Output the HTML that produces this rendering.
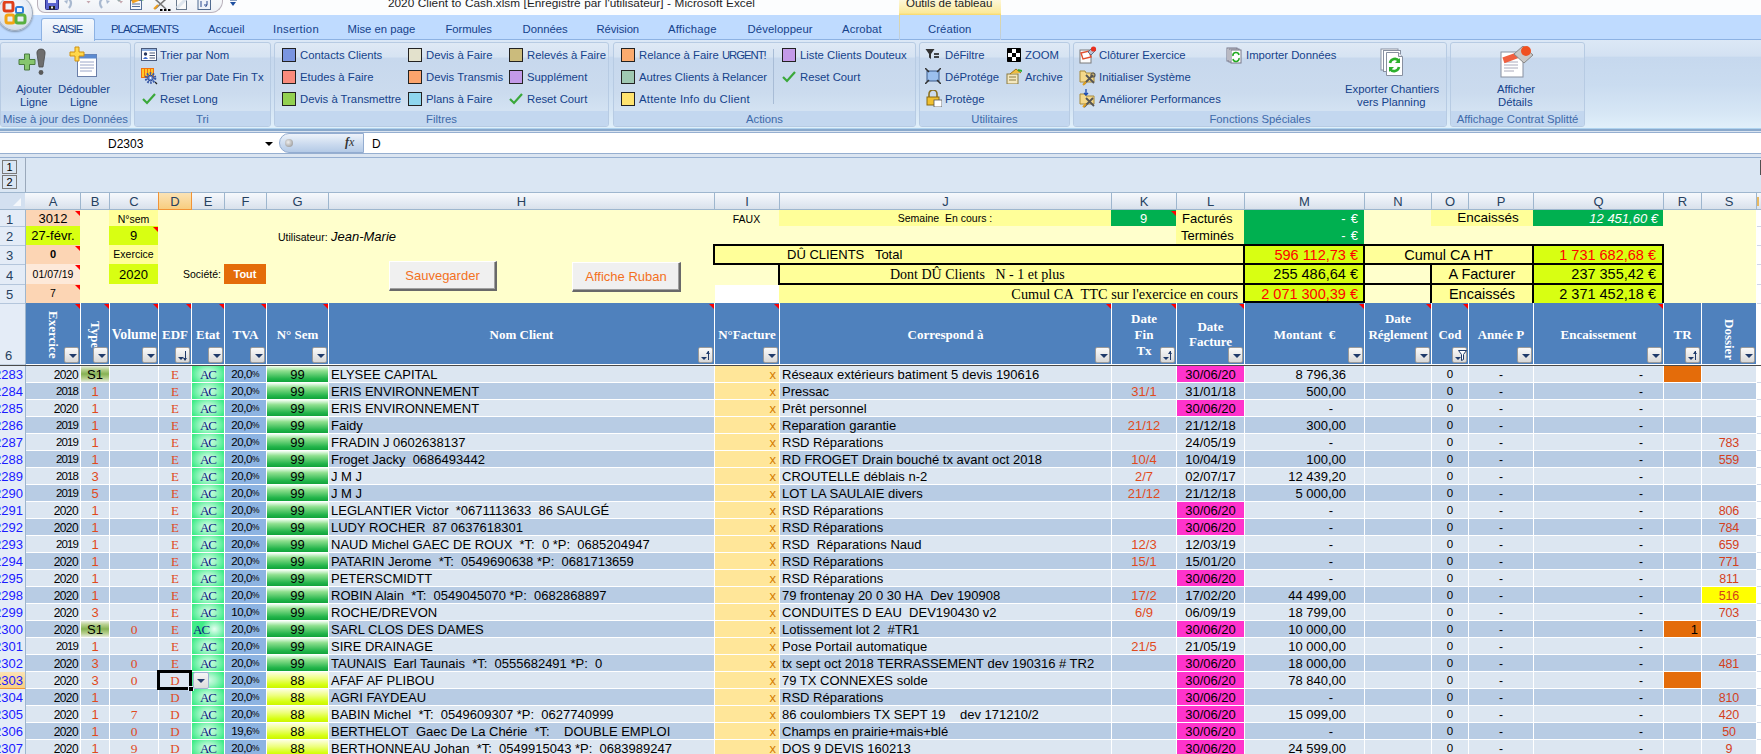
<!DOCTYPE html><html><head><meta charset="utf-8"><style>
*{margin:0;padding:0;box-sizing:border-box}
html,body{width:1761px;height:754px;overflow:hidden;background:#fff;font-family:"Liberation Sans",sans-serif}
div{position:absolute}
.t{white-space:nowrap;line-height:1}
.rb{font-size:11.3px;color:#15428b}
.c{display:flex;align-items:center;white-space:nowrap;overflow:hidden;line-height:1}
.cc{justify-content:center}
.cr{justify-content:flex-end}
</style></head><body><div style="left:0px;top:0px;width:1761px;height:15px;background:#fcfdfe"></div>
<div style="left:0px;top:15px;width:1761px;height:25px;background:#bfdbff"></div>
<div style="left:0px;top:39px;width:1761px;height:1px;background:#8db2e3"></div>
<div style="left:0px;top:40px;width:1761px;height:90px;background:linear-gradient(#dce8f6 0%,#d3e1f2 18%,#c6d8ee 19%,#cadcf0 50%,#d6e6f5 80%,#e2f1fb 100%)"></div>
<div style="left:0px;top:128px;width:1761px;height:1px;background:#aed2ee"></div>
<div style="left:0px;top:129px;width:1761px;height:2px;background:#8aa9cc"></div>
<div class="t" style="left:388px;top:-2px;font-size:11.8px;color:#1e1e1e;word-spacing:0.3px">2020 Client to Cash.xlsm [Enregistré par l'utilisateur] - Microsoft Excel</div>
<div style="left:899px;top:0px;width:102px;height:15px;background:linear-gradient(#fdf7d9,#fbe99a 85%,#f7d86a)"></div>
<div class="t" style="left:906px;top:-2px;font-size:11.5px;color:#1e1e1e">Outils de tableau</div>
<div style="left:37px;top:-8px;width:186px;height:21px;border-radius:0 0 12px 8px;background:linear-gradient(#fbfcfd,#eef1f6);border:1px solid #b9b1bb;border-top:none"></div>
<div style="left:116px;top:-1px;width:0;height:0;border-left:3px solid transparent;border-right:3px solid transparent;border-top:3px solid #9aa"></div>
<div style="left:-3px;top:-5px;width:36px;height:36px;border-radius:50%;background:radial-gradient(circle at 50% 35%,#f8fbff 0%,#e2e9f3 55%,#c5d1e0 100%);border:1px solid #9eaabb;box-shadow:0 1px 2px rgba(0,0,0,.35)"></div>
<svg style="position:absolute;left:2px;top:1px" width="26" height="25"><rect x="2" y="1" width="9" height="9" rx="2" fill="none" stroke="#e0401a" stroke-width="3"/><rect x="14" y="6" width="7" height="6" rx="1.5" fill="none" stroke="#2f7ed8" stroke-width="2"/><rect x="4" y="14" width="8" height="8" rx="2" fill="none" stroke="#f2a516" stroke-width="3"/><rect x="14" y="14" width="9" height="8" rx="2" fill="none" stroke="#58b040" stroke-width="3"/></svg>
<svg style="position:absolute;left:30px;top:0px" width="220" height="16"><rect x="15.5" y="-2" width="13" height="11.5" rx="1" fill="#5a64d0" stroke="#2c2f8a"/><rect x="18" y="-2" width="8" height="5" fill="#eef"/><rect x="19" y="6" width="6" height="3.5" fill="#222"/><rect x="21" y="6.5" width="2" height="2" fill="#eee"/><path d="M39 -1 q4 4 0 9" fill="none" stroke="#a9b9d0" stroke-width="2.2"/><path d="M38 0 l-4 1 3 3z" fill="#a9b9d0"/><path d="M56.5 1 l2 2.5 2-2.5z" fill="#c6a8b0"/><path d="M72 -1 q-4 4 0 9" fill="none" stroke="#a9b9d0" stroke-width="2.2"/><path d="M76 0 l4 1 -3 3z" fill="#a9b9d0"/><path d="M89 1 l2 2.5 2-2.5z" fill="#c6a8b0"/><rect x="100.5" y="0.5" width="11" height="9" fill="#f4f6fa" stroke="#55709a"/><path d="M102 4h8M102 6.5h8" stroke="#55709a"/><path d="M102 2 l7 -3" stroke="#f0a020" stroke-width="3"/><path d="M112 0 l3 -2" stroke="#30a030" stroke-width="2"/><path d="M125 -1 l11 10 M136 -1 l-11 10" stroke="#777" stroke-width="1.6"/><path d="M124 9 l4 -4" stroke="#f0a020" stroke-width="2"/><path d="M130 10h2.5M134 10h2.5M138 10h2.5" stroke="#000" stroke-width="1.8"/><rect x="146.5" y="-2" width="10" height="11.5" fill="#fafafa" stroke="#6a7a8e"/><path d="M147 8 l9 -9" stroke="#dfe6ee" stroke-width="3"/><rect x="168" y="-2" width="12.5" height="11.5" fill="#eef3fa" stroke="#4f6a8f"/><path d="M171 1v6M174 5h3l-1.5 2M177 1 v4" stroke="#2a4a8f" fill="none"/></svg>
<div style="left:230px;top:2px;width:0;height:0;border-left:3.5px solid transparent;border-right:3.5px solid transparent;border-top:4px solid #1f4fa0"></div>
<div style="left:230px;top:0px;width:7px;height:1px;background:#8aa0c0"></div>
<div style="left:41px;top:18px;width:54px;height:23px;border:1px solid #8db2e3;border-bottom:none;border-radius:3px 3px 0 0;background:linear-gradient(#f4f8fd,#e1ebf7)"></div>
<div class="t" style="left:52px;top:24px;font-size:11.3px;color:#15428b;letter-spacing:-1.05px">SAISIE</div>
<div class="t" style="left:111px;top:24px;font-size:11.3px;color:#15428b;letter-spacing:-0.95px">PLACEMENTS</div>
<div class="t" style="left:208px;top:24px;font-size:11.3px;color:#15428b;letter-spacing:0px">Accueil</div>
<div class="t" style="left:273px;top:24px;font-size:11.3px;color:#15428b;letter-spacing:0.3px">Insertion</div>
<div class="t" style="left:347.5px;top:24px;font-size:11.3px;color:#15428b;letter-spacing:0px">Mise en page</div>
<div class="t" style="left:445.5px;top:24px;font-size:11.3px;color:#15428b;letter-spacing:-0.1px">Formules</div>
<div class="t" style="left:522.5px;top:24px;font-size:11.3px;color:#15428b;letter-spacing:0px">Données</div>
<div class="t" style="left:596.5px;top:24px;font-size:11.3px;color:#15428b;letter-spacing:-0.1px">Révision</div>
<div class="t" style="left:668px;top:24px;font-size:11.3px;color:#15428b;letter-spacing:0.2px">Affichage</div>
<div class="t" style="left:747.5px;top:24px;font-size:11.3px;color:#15428b;letter-spacing:0.1px">Développeur</div>
<div class="t" style="left:842px;top:24px;font-size:11.3px;color:#15428b;letter-spacing:0.1px">Acrobat</div>
<div class="t" style="left:928px;top:24px;font-size:11.3px;color:#15428b;letter-spacing:0.1px">Création</div>
<div style="left:899px;top:15px;width:1px;height:25px;background:linear-gradient(#e8d890,#b8cce8)"></div>
<div style="left:1000px;top:15px;width:1px;height:25px;background:linear-gradient(#e8d890,#b8cce8)"></div>
<div style="left:0px;top:42px;width:131px;height:85px;border:1px solid #b7cbe3;border-radius:3px;background:linear-gradient(#dfe9f5 0%,#d6e3f2 17%,#c7d8ed 18%,#cbdbee 60%,#d3e2f2 80%)"></div>
<div style="left:1px;top:111px;width:129px;height:15px;background:#c3d7ef;border-radius:0 0 2px 2px"></div>
<div class="c cc" style="left:0px;top:112px;width:131px;height:15px;font-size:11.3px;color:#3e6aaa">Mise à jour des Données</div>
<div style="left:134px;top:42px;width:137px;height:85px;border:1px solid #b7cbe3;border-radius:3px;background:linear-gradient(#dfe9f5 0%,#d6e3f2 17%,#c7d8ed 18%,#cbdbee 60%,#d3e2f2 80%)"></div>
<div style="left:135px;top:111px;width:135px;height:15px;background:#c3d7ef;border-radius:0 0 2px 2px"></div>
<div class="c cc" style="left:134px;top:112px;width:137px;height:15px;font-size:11.3px;color:#3e6aaa">Tri</div>
<div style="left:274px;top:42px;width:335px;height:85px;border:1px solid #b7cbe3;border-radius:3px;background:linear-gradient(#dfe9f5 0%,#d6e3f2 17%,#c7d8ed 18%,#cbdbee 60%,#d3e2f2 80%)"></div>
<div style="left:275px;top:111px;width:333px;height:15px;background:#c3d7ef;border-radius:0 0 2px 2px"></div>
<div class="c cc" style="left:274px;top:112px;width:335px;height:15px;font-size:11.3px;color:#3e6aaa">Filtres</div>
<div style="left:613px;top:42px;width:303px;height:85px;border:1px solid #b7cbe3;border-radius:3px;background:linear-gradient(#dfe9f5 0%,#d6e3f2 17%,#c7d8ed 18%,#cbdbee 60%,#d3e2f2 80%)"></div>
<div style="left:614px;top:111px;width:301px;height:15px;background:#c3d7ef;border-radius:0 0 2px 2px"></div>
<div class="c cc" style="left:613px;top:112px;width:303px;height:15px;font-size:11.3px;color:#3e6aaa">Actions</div>
<div style="left:919px;top:42px;width:151px;height:85px;border:1px solid #b7cbe3;border-radius:3px;background:linear-gradient(#dfe9f5 0%,#d6e3f2 17%,#c7d8ed 18%,#cbdbee 60%,#d3e2f2 80%)"></div>
<div style="left:920px;top:111px;width:149px;height:15px;background:#c3d7ef;border-radius:0 0 2px 2px"></div>
<div class="c cc" style="left:919px;top:112px;width:151px;height:15px;font-size:11.3px;color:#3e6aaa">Utilitaires</div>
<div style="left:1073px;top:42px;width:374px;height:85px;border:1px solid #b7cbe3;border-radius:3px;background:linear-gradient(#dfe9f5 0%,#d6e3f2 17%,#c7d8ed 18%,#cbdbee 60%,#d3e2f2 80%)"></div>
<div style="left:1074px;top:111px;width:372px;height:15px;background:#c3d7ef;border-radius:0 0 2px 2px"></div>
<div class="c cc" style="left:1073px;top:112px;width:374px;height:15px;font-size:11.3px;color:#3e6aaa">Fonctions Spéciales</div>
<div style="left:1450px;top:42px;width:135px;height:85px;border:1px solid #b7cbe3;border-radius:3px;background:linear-gradient(#dfe9f5 0%,#d6e3f2 17%,#c7d8ed 18%,#cbdbee 60%,#d3e2f2 80%)"></div>
<div style="left:1451px;top:111px;width:133px;height:15px;background:#c3d7ef;border-radius:0 0 2px 2px"></div>
<div class="c cc" style="left:1450px;top:112px;width:135px;height:15px;font-size:11.3px;color:#3e6aaa">Affichage Contrat Splitté</div>
<svg style="position:absolute;left:17px;top:47px" width="32" height="32"><path d="M2 12.5h5.5v-5.5h5v5.5h5.5v5h-5.5v5.5h-5v-5.5h-5.5z" fill="#86c66e" stroke="#4a7a40" stroke-width="1"/><path d="M24 2c3 0 4.5 2 4 5l-2 13h-4l-2-13c-0.5-3 1-5 4-5z" fill="#6e6e6e" stroke="#4a4a4a" stroke-width=".8"/><circle cx="24" cy="25.5" r="2.4" fill="#5a5a5a"/></svg>
<svg style="position:absolute;left:68px;top:46px" width="32" height="33"><rect x="9.5" y="8.5" width="19" height="22" fill="#fff" stroke="#6b7fa8"/><rect x="9.5" y="8.5" width="19" height="4" fill="#5b8ad0"/><path d="M12 16h14M12 19h14M12 22h14M12 25h12" stroke="#9aa6c8"/><path d="M7 1h4v5h5v4h-5v5h-4v-5h-5v-4h5z" fill="#ffd84a" stroke="#d09010"/></svg>
<div class="t" style="left:16px;top:84px;font-size:11.3px;color:#15428b">Ajouter</div>
<div class="t" style="left:20px;top:97px;font-size:11.3px;color:#15428b">Ligne</div>
<div class="t" style="left:58px;top:84px;font-size:11.3px;color:#15428b">Dédoubler</div>
<div class="t" style="left:70px;top:97px;font-size:11.3px;color:#15428b">Ligne</div>
<svg style="position:absolute;left:141px;top:48px" width="17" height="14"><rect x="0.5" y="0.5" width="15" height="12" fill="#fff" stroke="#4a5a7a"/><rect x="1" y="1" width="14" height="2" fill="#8fb0e0"/><circle cx="4.5" cy="6" r="1.7" fill="#2a3a60"/><path d="M2 11 q2.5 -4 5 0z" fill="#3a6ad0"/><path d="M8.5 5h5.5M8.5 7.5h5.5M8.5 10h5.5" stroke="#4a5a7a"/></svg>
<div class="t" style="left:160px;top:50px;font-size:11.3px;color:#15428b">Trier par Nom</div>
<svg style="position:absolute;left:141px;top:68px" width="17" height="17"><rect x="0.5" y="0.5" width="12" height="9" fill="#ffc828" stroke="#f07010"/><path d="M3.5 1v8M6.5 1v8M9.5 1v8" stroke="#f07010"/><circle cx="9.5" cy="10" r="4.6" fill="none" stroke="#3a5aa8" stroke-width="2.4" stroke-dasharray="1.6 1.3"/><circle cx="9.5" cy="10" r="2.8" fill="#6a88d0" stroke="#2a4a98"/><circle cx="9.5" cy="10" r="1" fill="#fff"/><path d="M14 14l2 2" stroke="#222" stroke-width="1.2"/></svg>
<div class="t" style="left:160px;top:72px;font-size:11.3px;color:#15428b">Trier par Date Fin Tx</div>
<svg style="position:absolute;left:142px;top:93px" width="14" height="12"><path d="M1 6 l4 4 l8 -9" fill="none" stroke="#3aa83a" stroke-width="2.2"/></svg>
<div class="t" style="left:160px;top:94px;font-size:11.3px;color:#15428b">Reset Long</div>
<div style="left:282px;top:48px;width:14px;height:14px;border:1px solid #222;background:#7a95e0"></div>
<div class="t" style="left:300px;top:50px;font-size:11.3px;color:#15428b">Contacts Clients</div>
<div style="left:282px;top:70px;width:14px;height:14px;border:1px solid #222;background:#f98b7c"></div>
<div class="t" style="left:300px;top:72px;font-size:11.3px;color:#15428b">Etudes à Faire</div>
<div style="left:282px;top:92px;width:14px;height:14px;border:1px solid #222;background:#92d050"></div>
<div class="t" style="left:300px;top:94px;font-size:11.3px;color:#15428b">Devis à Transmettre</div>
<div style="left:408px;top:48px;width:14px;height:14px;border:1px solid #222;background:#e3e1cc"></div>
<div class="t" style="left:426px;top:50px;font-size:11.3px;color:#15428b">Devis à Faire</div>
<div style="left:408px;top:70px;width:14px;height:14px;border:1px solid #222;background:#fca46c"></div>
<div class="t" style="left:426px;top:72px;font-size:11.3px;color:#15428b">Devis Transmis</div>
<div style="left:408px;top:92px;width:14px;height:14px;border:1px solid #222;background:#8fd6ee"></div>
<div class="t" style="left:426px;top:94px;font-size:11.3px;color:#15428b">Plans à Faire</div>
<div style="left:509px;top:48px;width:14px;height:14px;border:1px solid #222;background:#cbbb7c"></div>
<div class="t" style="left:527px;top:50px;font-size:11.3px;color:#15428b">Relevés à Faire</div>
<div style="left:509px;top:70px;width:14px;height:14px;border:1px solid #222;background:#c39ae8"></div>
<div class="t" style="left:527px;top:72px;font-size:11.3px;color:#15428b">Supplément</div>
<svg style="position:absolute;left:509px;top:93px" width="14" height="12"><path d="M1 6 l4 4 l8 -9" fill="none" stroke="#3aa83a" stroke-width="2.2"/></svg>
<div class="t" style="left:527px;top:94px;font-size:11.3px;color:#15428b">Reset Court</div>
<div style="left:621px;top:48px;width:14px;height:14px;border:1px solid #222;background:#fbab6e"></div>
<div class="t" style="left:639px;top:50px;font-size:11.3px;color:#15428b">Relance à Faire <span style="letter-spacing:-1px">URGENT!</span></div>
<div style="left:621px;top:70px;width:14px;height:14px;border:1px solid #222;background:#9fc8b2"></div>
<div class="t" style="left:639px;top:72px;font-size:11.3px;color:#15428b">Autres Clients à Relancer</div>
<div style="left:621px;top:92px;width:14px;height:14px;border:1px solid #222;background:#ffe36e"></div>
<div class="t" style="left:639px;top:94px;font-size:11.3px;color:#15428b"><span style="letter-spacing:0.25px">Attente Info du Client</span></div>
<div style="left:773px;top:49px;width:1px;height:55px;background:#a8bcd6"></div>
<div style="left:782px;top:48px;width:14px;height:14px;border:1px solid #222;background:#c39ae8"></div>
<div class="t" style="left:800px;top:50px;font-size:11.3px;color:#15428b">Liste Clients Douteux</div>
<svg style="position:absolute;left:782px;top:71px" width="14" height="12"><path d="M1 6 l4 4 l8 -9" fill="none" stroke="#3aa83a" stroke-width="2.2"/></svg>
<div class="t" style="left:800px;top:72px;font-size:11.3px;color:#15428b">Reset Court</div>
<svg style="position:absolute;left:925px;top:48px" width="16" height="13"><path d="M0.5 1h9l-3.5 5v5l-2-1.5v-3.5z" fill="#333"/><path d="M9 6h5M9 9h5" stroke="#111" stroke-width="1.6"/></svg>
<div class="t" style="left:945px;top:50px;font-size:11.3px;color:#15428b">DéFiltre</div>
<svg style="position:absolute;left:925px;top:68px" width="16" height="16"><rect x="2" y="3" width="12" height="10" fill="#9cc0ee" stroke="#3a5a8a"/><path d="M0 0l4 4M16 0l-4 4M0 16l4-4M16 16l-4-4" stroke="#333" stroke-width="1.5"/></svg>
<div class="t" style="left:945px;top:72px;font-size:11.3px;color:#15428b">DéProtége</div>
<svg style="position:absolute;left:925px;top:90px" width="17" height="17"><path d="M4 7v-3a4 4 0 0 1 8 0v3" fill="none" stroke="#8a7020" stroke-width="1.6"/><rect x="2" y="7" width="12" height="8" fill="#f0c030" stroke="#8a6a10"/><rect x="9" y="10" width="8" height="7" fill="#fff" stroke="#555" stroke-width=".8"/></svg>
<div class="t" style="left:945px;top:94px;font-size:11.3px;color:#15428b">Protège</div>
<svg style="position:absolute;left:1007px;top:48px" width="14" height="14"><rect x="0" y="0" width="14" height="14" rx="0.8" fill="#000"/><rect x="5" y="1" width="4" height="4" fill="#fff"/><rect x="1" y="5" width="4" height="4" fill="#fff"/><rect x="9" y="5" width="4" height="4" fill="#fff"/><rect x="5" y="9" width="4" height="4" fill="#fff"/></svg>
<div class="t" style="left:1025px;top:50px;font-size:11.3px;color:#15428b">ZOOM</div>
<svg style="position:absolute;left:1006px;top:68px" width="16" height="16"><rect x="1" y="6" width="11" height="10" fill="#f4e8c0" stroke="#8a7a40"/><path d="M3 9h7M3 12h7" stroke="#8a7a40"/><path d="M4 6l6-5 5 4" fill="#f0c040" stroke="#a07010"/><path d="M12 2l4 1" stroke="#3a3" stroke-width="2"/></svg>
<div class="t" style="left:1025px;top:72px;font-size:11.3px;color:#15428b">Archive</div>
<svg style="position:absolute;left:1079px;top:46px" width="18" height="18"><rect x="1" y="4" width="11" height="13" fill="#fbfbfb" stroke="#7a7a7a"/><path d="M2 7 l8 -2 2 6 -8 2z" fill="#fff" stroke="#e05030" stroke-width="1.4"/><path d="M9 6 l5 -5 3 3 -5 5z" fill="#b8c0d0" stroke="#60708a"/><circle cx="14.5" cy="3" r="2.6" fill="#e83020"/></svg>
<div class="t" style="left:1099px;top:50px;font-size:11.3px;color:#15428b">Clôturer Exercice</div>
<svg style="position:absolute;left:1079px;top:67px" width="19" height="19"><path d="M1 4h5l1 2h8v9h-14z" fill="#f4d88a" stroke="#a88a3a"/><path d="M5 17 l9 -9M7 8 l8 8" stroke="#555" stroke-width="1.8"/><path d="M4 18 l3 -3" stroke="#e0a020" stroke-width="2"/><circle cx="14" cy="8" r="2" fill="none" stroke="#555" stroke-width="1.2"/></svg>
<div class="t" style="left:1099px;top:72px;font-size:11.3px;color:#15428b">Initialiser Système</div>
<svg style="position:absolute;left:1079px;top:89px" width="19" height="19"><path d="M1 5h5l1 2h8v8h-14z" fill="#f4d88a" stroke="#a88a3a"/><path d="M5 18 l9 -9M7 9 l8 8" stroke="#555" stroke-width="1.8"/><path d="M4 18 l3 -3" stroke="#e0a020" stroke-width="2"/><path d="M7 0v6M5 4l2 2 2-2" stroke="#1a4ab0" stroke-width="1.3" fill="none"/></svg>
<div class="t" style="left:1099px;top:94px;font-size:11.3px;color:#15428b">Améliorer Performances</div>
<svg style="position:absolute;left:1226px;top:47px" width="17" height="17"><rect x="1" y="1" width="10" height="13" fill="#fff" stroke="#778"/><rect x="3" y="2" width="10" height="13" fill="#fff" stroke="#778"/><rect x="5" y="3" width="10" height="13" fill="#fff" stroke="#778"/><path d="M7 9a3 3 0 0 1 6-1M13 11a3 3 0 0 1-6 1" fill="none" stroke="#2a2" stroke-width="1.6"/></svg>
<div class="t" style="left:1246px;top:50px;font-size:11.3px;color:#15428b">Importer Données</div>
<svg style="position:absolute;left:1380px;top:48px" width="28" height="30"><rect x="1" y="1" width="17" height="21" fill="#fff" stroke="#8890a0"/><rect x="3.5" y="2.5" width="17" height="21" fill="#fff" stroke="#8890a0"/><path d="M6.5 4.5h12l4 4v19h-16z" fill="#fff" stroke="#8890a0"/><path d="M18.5 4.5v4h4" fill="#e8eaf0" stroke="#8890a0"/><path d="M10 15a5 5 0 0 1 9 -2" fill="none" stroke="#2db02d" stroke-width="2.6"/><path d="M20 10v5h-5z" fill="#2db02d"/><path d="M19 19a5 5 0 0 1 -9 2" fill="none" stroke="#2db02d" stroke-width="2.6"/><path d="M9 24v-5h5z" fill="#2db02d"/></svg>
<div class="t" style="left:1345px;top:84px;font-size:11.3px;color:#15428b">Exporter Chantiers</div>
<div class="t" style="left:1357px;top:97px;font-size:11.3px;color:#15428b">vers Planning</div>
<svg style="position:absolute;left:1500px;top:46px" width="34" height="32"><rect x="1" y="6" width="22" height="25" fill="#fff" stroke="#8890a0"/><path d="M4 16h14M4 19h14M4 22h14M4 25h10" stroke="#aab"/><rect x="3" y="9" width="15" height="6" fill="#f06040" transform="rotate(-20 10 12)"/><path d="M14 8l9-8 10 9-9 8z" fill="#c8c8c8" stroke="#888"/><circle cx="26" cy="5" r="5" fill="#f05020"/></svg>
<div class="t" style="left:1497px;top:84px;font-size:11.3px;color:#15428b">Afficher</div>
<div class="t" style="left:1498px;top:97px;font-size:11.3px;color:#15428b">Détails</div>
<div style="left:0px;top:131px;width:1761px;height:27px;background:#dbe5f1"></div>
<div style="left:0px;top:132px;width:1761px;height:1px;background:#96afd0"></div>
<div style="left:0px;top:133px;width:1761px;height:20px;background:#fff"></div>
<div style="left:0px;top:153px;width:1761px;height:1px;background:#96afd0"></div>
<div style="left:0px;top:157px;width:1761px;height:1px;background:#96afd0"></div>
<div class="t" style="left:108px;top:138px;font-size:12px;color:#000">D2303</div>
<div style="left:265px;top:142px;width:0;height:0;border-left:4px solid transparent;border-right:4px solid transparent;border-top:4px solid #000"></div>
<div style="left:279px;top:133px;width:85px;height:20px;border-radius:10px 0 0 10px;background:linear-gradient(#eef3fa,#c9d9ee 60%,#b4cae6);border:1px solid #93acd0;border-right:1px solid #93acd0"></div>
<div style="left:285px;top:139px;width:8px;height:8px;border-radius:50%;background:radial-gradient(circle at 40% 40%,#eee,#888)"></div>
<div class="t" style="left:345px;top:136px;font-size:12px;font-family:'Liberation Serif',serif;color:#333"><i><b>f</b>x</i></div>
<div class="t" style="left:372px;top:138px;font-size:12px;color:#000">D</div>
<div style="left:0px;top:158px;width:1761px;height:34px;background:#dae6f3"></div>
<div style="left:25px;top:158px;width:1px;height:34px;background:#9aa9bb"></div>
<div class="c cc" style="left:2px;top:160px;width:15px;height:14px;border:1px solid #7a7a7a;background:#dae6f3;font-size:11px;color:#000">1</div>
<div class="c cc" style="left:2px;top:175px;width:15px;height:14px;border:1px solid #7a7a7a;background:#dae6f3;font-size:11px;color:#000">2</div>
<div style="left:1760px;top:160px;width:2px;height:15px;background:#505050"></div>
<div style="left:0px;top:192px;width:1761px;height:18px;background:linear-gradient(#f8fafd,#e4eaf3 60%,#d7dfea)"></div>
<div style="left:0px;top:192px;width:1761px;height:1px;background:#9eb6ce"></div>
<div style="left:0px;top:209px;width:1761px;height:1px;background:#9eb6ce"></div>
<div style="left:0px;top:193px;width:25px;height:16px;background:#d3e0f0"></div>
<div style="left:13px;top:198px;width:0;height:0;border-left:8px solid transparent;border-bottom:8px solid #f4f7fb"></div>
<div style="left:80px;top:193px;width:1px;height:16px;background:#9eb6ce"></div>
<div class="c cc" style="left:26px;top:193px;width:54px;height:16px;font-size:13px;color:#27415f">A</div>
<div style="left:109px;top:193px;width:1px;height:16px;background:#9eb6ce"></div>
<div class="c cc" style="left:81px;top:193px;width:28px;height:16px;font-size:13px;color:#27415f">B</div>
<div style="left:158px;top:193px;width:1px;height:16px;background:#9eb6ce"></div>
<div class="c cc" style="left:110px;top:193px;width:48px;height:16px;font-size:13px;color:#27415f">C</div>
<div style="left:159px;top:193px;width:32px;height:16px;background:linear-gradient(#fbe3b5,#f8cd80);"></div>
<div style="left:158px;top:192px;width:1px;height:18px;background:#f29436"></div>
<div style="left:191px;top:192px;width:1px;height:18px;background:#f29436"></div>
<div style="left:158px;top:209px;width:34px;height:1px;background:#f29436"></div>
<div class="c cc" style="left:159px;top:193px;width:32px;height:16px;font-size:13px;color:#27415f">D</div>
<div style="left:224px;top:193px;width:1px;height:16px;background:#9eb6ce"></div>
<div class="c cc" style="left:192px;top:193px;width:32px;height:16px;font-size:13px;color:#27415f">E</div>
<div style="left:266px;top:193px;width:1px;height:16px;background:#9eb6ce"></div>
<div class="c cc" style="left:225px;top:193px;width:41px;height:16px;font-size:13px;color:#27415f">F</div>
<div style="left:328px;top:193px;width:1px;height:16px;background:#9eb6ce"></div>
<div class="c cc" style="left:267px;top:193px;width:61px;height:16px;font-size:13px;color:#27415f">G</div>
<div style="left:714px;top:193px;width:1px;height:16px;background:#9eb6ce"></div>
<div class="c cc" style="left:329px;top:193px;width:385px;height:16px;font-size:13px;color:#27415f">H</div>
<div style="left:779px;top:193px;width:1px;height:16px;background:#9eb6ce"></div>
<div class="c cc" style="left:715px;top:193px;width:64px;height:16px;font-size:13px;color:#27415f">I</div>
<div style="left:1111px;top:193px;width:1px;height:16px;background:#9eb6ce"></div>
<div class="c cc" style="left:780px;top:193px;width:331px;height:16px;font-size:13px;color:#27415f">J</div>
<div style="left:1176px;top:193px;width:1px;height:16px;background:#9eb6ce"></div>
<div class="c cc" style="left:1112px;top:193px;width:64px;height:16px;font-size:13px;color:#27415f">K</div>
<div style="left:1244px;top:193px;width:1px;height:16px;background:#9eb6ce"></div>
<div class="c cc" style="left:1177px;top:193px;width:67px;height:16px;font-size:13px;color:#27415f">L</div>
<div style="left:1364px;top:193px;width:1px;height:16px;background:#9eb6ce"></div>
<div class="c cc" style="left:1245px;top:193px;width:119px;height:16px;font-size:13px;color:#27415f">M</div>
<div style="left:1431px;top:193px;width:1px;height:16px;background:#9eb6ce"></div>
<div class="c cc" style="left:1365px;top:193px;width:66px;height:16px;font-size:13px;color:#27415f">N</div>
<div style="left:1468px;top:193px;width:1px;height:16px;background:#9eb6ce"></div>
<div class="c cc" style="left:1432px;top:193px;width:36px;height:16px;font-size:13px;color:#27415f">O</div>
<div style="left:1533px;top:193px;width:1px;height:16px;background:#9eb6ce"></div>
<div class="c cc" style="left:1469px;top:193px;width:64px;height:16px;font-size:13px;color:#27415f">P</div>
<div style="left:1663px;top:193px;width:1px;height:16px;background:#9eb6ce"></div>
<div class="c cc" style="left:1534px;top:193px;width:129px;height:16px;font-size:13px;color:#27415f">Q</div>
<div style="left:1701px;top:193px;width:1px;height:16px;background:#9eb6ce"></div>
<div class="c cc" style="left:1664px;top:193px;width:37px;height:16px;font-size:13px;color:#27415f">R</div>
<div style="left:1756px;top:193px;width:1px;height:16px;background:#9eb6ce"></div>
<div class="c cc" style="left:1702px;top:193px;width:54px;height:16px;font-size:13px;color:#27415f">S</div>
<div style="left:1757px;top:197px;width:2px;height:9px;background:#e8b860"></div>
<div style="left:0px;top:210px;width:25px;height:544px;background:#e4ecf7"></div>
<div style="left:25px;top:210px;width:1px;height:544px;background:#9eb6ce"></div>
<div style="left:0px;top:226px;width:25px;height:1px;background:#b4c6dc"></div>
<div class="c cc" style="left:-3px;top:211px;width:25px;height:16px;font-size:13px;color:#27415f">1</div>
<div style="left:0px;top:245px;width:25px;height:1px;background:#b4c6dc"></div>
<div class="c cc" style="left:-3px;top:227px;width:25px;height:19px;font-size:13px;color:#27415f">2</div>
<div style="left:0px;top:264px;width:25px;height:1px;background:#b4c6dc"></div>
<div class="c cc" style="left:-3px;top:246px;width:25px;height:19px;font-size:13px;color:#27415f">3</div>
<div style="left:0px;top:284px;width:25px;height:1px;background:#b4c6dc"></div>
<div class="c cc" style="left:-3px;top:265px;width:25px;height:20px;font-size:13px;color:#27415f">4</div>
<div style="left:0px;top:303px;width:25px;height:1px;background:#b4c6dc"></div>
<div class="c cc" style="left:-3px;top:285px;width:25px;height:19px;font-size:13px;color:#27415f">5</div>
<div style="left:0px;top:364px;width:25px;height:1px;background:#b4c6dc"></div>
<div class="t" style="left:5px;top:349px;font-size:13px;color:#27415f">6</div>
<div style="left:26px;top:210px;width:1730px;height:93px;background:#ffffcc"></div>
<div style="left:1757px;top:210px;width:4px;height:544px;background:#fff"></div>
<div style="left:1757px;top:226px;width:4px;height:1px;background:#d0d7e5"></div>
<div style="left:1757px;top:245px;width:4px;height:1px;background:#d0d7e5"></div>
<div style="left:1757px;top:264px;width:4px;height:1px;background:#d0d7e5"></div>
<div style="left:1757px;top:284px;width:4px;height:1px;background:#d0d7e5"></div>
<div style="left:1757px;top:303px;width:4px;height:1px;background:#d0d7e5"></div>
<div class="c cc" style="left:26px;top:210px;width:54px;height:16px;background:#fcd5b4;font-size:13px;color:#000;">3012</div>
<div style="left:75px;top:211px;width:0;height:0;border-left:5px solid transparent;border-top:5px solid #f00"></div>
<div class="c cc" style="left:109px;top:210px;width:49px;height:16px;background:#ffff99;font-size:10.5px;padding-top:2px">N°sem</div>
<div class="c cc" style="left:714px;top:210px;width:65px;height:16px;font-size:10.5px;padding-top:2px">FAUX</div>
<div class="c cc" style="left:779px;top:210px;width:332px;height:16px;background:#ffff99;font-size:10.5px;padding-top:1px">Semaine&nbsp; En cours :</div>
<div class="c cc" style="left:1111px;top:210px;width:65px;height:16px;background:#00b050;font-size:13px;color:#fff;">9</div>
<div style="left:1171px;top:211px;width:0;height:0;border-left:5px solid transparent;border-top:5px solid #f00"></div>
<div class="c cl" style="left:1176px;top:210px;width:68px;height:16px;background:#ffff99;padding:0 6px;font-size:13px;justify-content:flex-start;padding-left:6px">Facturés</div>
<div class="c cr" style="left:1244px;top:210px;width:120px;height:16px;background:#00b050;padding:0 6px;font-size:13px;color:#fff;word-spacing:1.5px">- €</div>
<div class="c cc" style="left:1431px;top:210px;width:102px;height:16px;background:#ffff99;font-size:13.5px;padding-left:12px">Encaissés</div>
<div class="c cr" style="left:1533px;top:210px;width:130px;height:16px;background:#00b050;padding:0 5px;font-size:13px;color:#fff;font-style:italic">12 451,60 €</div>
<div class="c cc" style="left:26px;top:226px;width:54px;height:19px;background:#d8ff12;font-size:13px;color:#000;">27-févr.</div>
<div class="c cc" style="left:109px;top:226px;width:49px;height:19px;background:#d8ff12;font-size:13px;color:#000;">9</div>
<div style="left:153px;top:227px;width:0;height:0;border-left:5px solid transparent;border-top:5px solid #f00"></div>
<div class="t" style="left:278px;top:232px;font-size:10.5px">Utilisateur:</div>
<div class="t" style="left:331px;top:230px;font-size:13px;font-style:italic">Jean-Marie</div>
<div class="c cl" style="left:1176px;top:226px;width:68px;height:19px;background:#ffff99;padding:0 5px;font-size:13px;justify-content:flex-start;padding-left:5px">Terminés</div>
<div class="c cr" style="left:1244px;top:226px;width:120px;height:19px;background:#00b050;padding:0 6px;font-size:13px;color:#fff;word-spacing:1.5px">- €</div>
<div class="c cc" style="left:26px;top:245px;width:54px;height:19px;background:#fcd5b4;font-size:11px"><b>0</b></div>
<div style="left:75px;top:246px;width:0;height:0;border-left:5px solid transparent;border-top:5px solid #f00"></div>
<div class="c cc" style="left:109px;top:245px;width:49px;height:19px;background:#ffff99;font-size:10.5px;">Exercice</div>
<div class="c cc" style="left:26px;top:264px;width:54px;height:20px;background:#fde9d9;font-size:10.5px">01/07/19</div>
<div style="left:75px;top:265px;width:0;height:0;border-left:5px solid transparent;border-top:5px solid #f00"></div>
<div class="c cc" style="left:109px;top:264px;width:49px;height:20px;background:#d8ff12;font-size:13px;color:#000;">2020</div>
<div class="t" style="left:183px;top:269px;font-size:10.5px">Société:</div>
<div class="c cc" style="left:224px;top:264px;width:42px;height:20px;background:#e46c0a;font-size:11px;color:#fff"><b>Tout</b></div>
<div class="c cc" style="left:26px;top:284px;width:54px;height:19px;background:#fcd5b4;font-size:10.5px">7</div>
<div style="left:75px;top:285px;width:0;height:0;border-left:5px solid transparent;border-top:5px solid #f00"></div>
<div style="left:715px;top:285px;width:64px;height:18px;background:#fff"></div>
<div class="c cc" style="left:779px;top:284px;width:465px;height:19px;background:#ffff99;"></div>
<div class="c cc" style="left:715px;top:246px;width:528px;height:17px;background:#ffff99;padding:0 4px;padding-top:1px;font-size:13px;justify-content:flex-start;padding-left:72px;padding-top:0;padding-bottom:1px">DÛ CLIENTS &nbsp; Total</div>
<div class="c cc" style="left:780px;top:265px;width:463px;height:18px;background:#ffff99;padding:0 4px;padding-top:1px;font-size:14px;font-family:'Liberation Serif',serif;justify-content:flex-start;padding-left:110px">Dont DÛ Clients &nbsp; N - 1 et plus</div>
<div class="c cr" style="left:780px;top:285px;width:463px;height:18px;background:#ffff99;padding:0 5px;padding-top:1px;font-size:14.3px;font-family:'Liberation Serif',serif;">Cumul CA&nbsp; TTC sur l'exercice en cours</div>
<div class="c cr" style="left:1245px;top:246px;width:118px;height:17px;background:#d8ff12;padding:0 5px;padding-top:1px;font-size:14.5px;color:#f00">596 112,73 €</div>
<div class="c cr" style="left:1245px;top:265px;width:118px;height:18px;background:#d8ff12;padding:0 5px;padding-top:1px;font-size:14.5px;color:#000">255 486,64 €</div>
<div class="c cr" style="left:1245px;top:285px;width:118px;height:18px;background:#d8ff12;padding:0 5px;padding-top:1px;font-size:14.5px;color:#f00">2 071 300,39 €</div>
<div class="c cc" style="left:1365px;top:246px;width:167px;height:17px;background:#ffff99;padding:0 4px;padding-top:1px;font-size:14.5px;">Cumul CA HT</div>
<div class="c cc" style="left:1432px;top:265px;width:100px;height:18px;background:#ffff99;padding:0 4px;padding-top:1px;font-size:14.5px;">A Facturer</div>
<div class="c cc" style="left:1432px;top:285px;width:100px;height:18px;background:#ffff99;padding:0 4px;padding-top:1px;font-size:14.5px;">Encaissés</div>
<div class="c cr" style="left:1534px;top:246px;width:128px;height:17px;background:#d8ff12;padding:0 6px;padding-top:1px;font-size:14.5px;color:#f00">1 731 682,68 €</div>
<div class="c cr" style="left:1534px;top:265px;width:128px;height:18px;background:#d8ff12;padding:0 6px;padding-top:1px;font-size:14.5px;color:#000">237 355,42 €</div>
<div class="c cr" style="left:1534px;top:285px;width:128px;height:18px;background:#d8ff12;padding:0 6px;padding-top:1px;font-size:14.5px;color:#000">2 371 452,18 €</div>
<div style="left:713px;top:244px;width:951px;height:2px;background:#000"></div>
<div style="left:713px;top:263px;width:951px;height:2px;background:#000"></div>
<div style="left:778px;top:283px;width:886px;height:2px;background:#000"></div>
<div style="left:713px;top:244px;width:2px;height:21px;background:#000"></div>
<div style="left:778px;top:263px;width:2px;height:22px;background:#000"></div>
<div style="left:1243px;top:244px;width:2px;height:59px;background:#000"></div>
<div style="left:1363px;top:244px;width:2px;height:59px;background:#000"></div>
<div style="left:1430px;top:263px;width:2px;height:40px;background:#000"></div>
<div style="left:1532px;top:244px;width:2px;height:59px;background:#000"></div>
<div style="left:1662px;top:244px;width:2px;height:59px;background:#000"></div>
<div style="left:1243px;top:301px;width:122px;height:2px;background:#000"></div>
<div class="c cc" style="left:389px;top:261px;width:108px;height:30px;background:#f0f0f0;border:1px solid #fff;border-right:2px solid #696969;border-bottom:2px solid #696969;box-shadow:inset -1px -1px 0 #a0a0a0;font-size:13px;color:#f3701e">Sauvegarder</div>
<div class="c cc" style="left:572px;top:262px;width:109px;height:30px;background:#f0f0f0;border:1px solid #fff;border-right:2px solid #696969;border-bottom:2px solid #696969;box-shadow:inset -1px -1px 0 #a0a0a0;font-size:13px;color:#f3701e">Affiche Ruban</div>
<div style="left:26px;top:303px;width:1730px;height:61px;background:#4f81bd"></div>
<div style="left:80px;top:303px;width:1px;height:61px;background:#fff"></div>
<div style="left:109px;top:303px;width:1px;height:61px;background:#fff"></div>
<div style="left:158px;top:303px;width:1px;height:61px;background:#fff"></div>
<div style="left:191px;top:303px;width:1px;height:61px;background:#fff"></div>
<div style="left:224px;top:303px;width:1px;height:61px;background:#fff"></div>
<div style="left:266px;top:303px;width:1px;height:61px;background:#fff"></div>
<div style="left:328px;top:303px;width:1px;height:61px;background:#fff"></div>
<div style="left:714px;top:303px;width:1px;height:61px;background:#fff"></div>
<div style="left:779px;top:303px;width:1px;height:61px;background:#fff"></div>
<div style="left:1111px;top:303px;width:1px;height:61px;background:#fff"></div>
<div style="left:1176px;top:303px;width:1px;height:61px;background:#fff"></div>
<div style="left:1244px;top:303px;width:1px;height:61px;background:#fff"></div>
<div style="left:1364px;top:303px;width:1px;height:61px;background:#fff"></div>
<div style="left:1431px;top:303px;width:1px;height:61px;background:#fff"></div>
<div style="left:1468px;top:303px;width:1px;height:61px;background:#fff"></div>
<div style="left:1533px;top:303px;width:1px;height:61px;background:#fff"></div>
<div style="left:1663px;top:303px;width:1px;height:61px;background:#fff"></div>
<div style="left:1701px;top:303px;width:1px;height:61px;background:#fff"></div>
<div class="t" style="left:22px;top:333px;width:60px;height:16px;font-family:'Liberation Serif',serif;font-weight:bold;color:#fff;font-size:13px;transform:rotate(90deg);text-align:left;">Exercice</div>
<div class="t" style="left:64px;top:343px;width:60px;height:16px;font-family:'Liberation Serif',serif;font-weight:bold;color:#fff;font-size:13px;transform:rotate(90deg);text-align:left;">Type</div>
<div class="c cc" style="left:110px;top:303px;width:48px;height:61px;font-family:'Liberation Serif',serif;font-weight:bold;color:#fff;font-size:13px;text-align:center;line-height:1.15;white-space:normal;padding-top:3px;font-size:13.8px">Volume</div>
<div class="c cc" style="left:159px;top:303px;width:32px;height:61px;font-family:'Liberation Serif',serif;font-weight:bold;color:#fff;font-size:13px;text-align:center;line-height:1.15;white-space:normal;padding-top:3px;">EDF</div>
<div class="c cc" style="left:192px;top:303px;width:32px;height:61px;font-family:'Liberation Serif',serif;font-weight:bold;color:#fff;font-size:13px;text-align:center;line-height:1.15;white-space:normal;padding-top:3px;">Etat</div>
<div class="c cc" style="left:225px;top:303px;width:41px;height:61px;font-family:'Liberation Serif',serif;font-weight:bold;color:#fff;font-size:13px;text-align:center;line-height:1.15;white-space:normal;padding-top:3px;">TVA</div>
<div class="c cc" style="left:267px;top:303px;width:61px;height:61px;font-family:'Liberation Serif',serif;font-weight:bold;color:#fff;font-size:13px;text-align:center;line-height:1.15;white-space:normal;padding-top:3px;">N° Sem</div>
<div class="c cc" style="left:329px;top:303px;width:385px;height:61px;font-family:'Liberation Serif',serif;font-weight:bold;color:#fff;font-size:13px;text-align:center;line-height:1.15;white-space:normal;padding-top:3px;">Nom Client</div>
<div class="c cc" style="left:715px;top:303px;width:64px;height:61px;font-family:'Liberation Serif',serif;font-weight:bold;color:#fff;font-size:13px;text-align:center;line-height:1.15;white-space:normal;padding-top:3px;">N°Facture</div>
<div class="c cc" style="left:780px;top:303px;width:331px;height:61px;font-family:'Liberation Serif',serif;font-weight:bold;color:#fff;font-size:13px;text-align:center;line-height:1.15;white-space:normal;padding-top:3px;">Correspond à</div>
<div class="c cc" style="left:1112px;top:303px;width:64px;height:61px;font-family:'Liberation Serif',serif;font-weight:bold;color:#fff;font-size:13px;text-align:center;line-height:1.15;white-space:normal;padding-top:3px;justify-content:flex-start;padding-left:19px;line-height:16px;padding-top:3px">Date<br>Fin<br>Tx</div>
<div class="c cc" style="left:1177px;top:303px;width:67px;height:61px;font-family:'Liberation Serif',serif;font-weight:bold;color:#fff;font-size:13px;text-align:center;line-height:1.15;white-space:normal;padding-top:3px;line-height:15.5px;padding-top:1px">Date<br>Facture</div>
<div class="c cc" style="left:1245px;top:303px;width:119px;height:61px;font-family:'Liberation Serif',serif;font-weight:bold;color:#fff;font-size:13px;text-align:center;line-height:1.15;white-space:normal;padding-top:3px;">Montant&nbsp; €</div>
<div class="c cc" style="left:1365px;top:303px;width:66px;height:61px;font-family:'Liberation Serif',serif;font-weight:bold;color:#fff;font-size:13px;text-align:center;line-height:1.15;white-space:normal;padding-top:3px;line-height:16px;padding-top:0;padding-bottom:13px">Date<br>Réglement</div>
<div class="c cc" style="left:1432px;top:303px;width:36px;height:61px;font-family:'Liberation Serif',serif;font-weight:bold;color:#fff;font-size:13px;text-align:center;line-height:1.15;white-space:normal;padding-top:3px;">Cod</div>
<div class="c cc" style="left:1469px;top:303px;width:64px;height:61px;font-family:'Liberation Serif',serif;font-weight:bold;color:#fff;font-size:13px;text-align:center;line-height:1.15;white-space:normal;padding-top:3px;">Année P</div>
<div class="c cc" style="left:1534px;top:303px;width:129px;height:61px;font-family:'Liberation Serif',serif;font-weight:bold;color:#fff;font-size:13px;text-align:center;line-height:1.15;white-space:normal;padding-top:3px;">Encaissement</div>
<div class="c cc" style="left:1664px;top:303px;width:37px;height:61px;font-family:'Liberation Serif',serif;font-weight:bold;color:#fff;font-size:13px;text-align:center;line-height:1.15;white-space:normal;padding-top:3px;">TR</div>
<div class="t" style="left:1698px;top:341px;width:60px;height:16px;font-family:'Liberation Serif',serif;font-weight:bold;color:#fff;font-size:13px;transform:rotate(90deg);text-align:left;">Dossier</div>
<div style="left:64px;top:347px;width:15px;height:16px;background:linear-gradient(#fafafa,#d8d8d8);border:1px solid #9a9a9a;border-radius:2px"><div style="left:4px;top:6px;width:0;height:0;border-left:4px solid transparent;border-right:4px solid transparent;border-top:4px solid #1f3a6a"></div></div>
<div style="left:93px;top:347px;width:15px;height:16px;background:linear-gradient(#fafafa,#d8d8d8);border:1px solid #9a9a9a;border-radius:2px"><div style="left:4px;top:6px;width:0;height:0;border-left:4px solid transparent;border-right:4px solid transparent;border-top:4px solid #1f3a6a"></div></div>
<div style="left:142px;top:347px;width:15px;height:16px;background:linear-gradient(#fafafa,#d8d8d8);border:1px solid #9a9a9a;border-radius:2px"><div style="left:4px;top:6px;width:0;height:0;border-left:4px solid transparent;border-right:4px solid transparent;border-top:4px solid #1f3a6a"></div></div>
<div style="left:208px;top:347px;width:15px;height:16px;background:linear-gradient(#fafafa,#d8d8d8);border:1px solid #9a9a9a;border-radius:2px"><div style="left:4px;top:6px;width:0;height:0;border-left:4px solid transparent;border-right:4px solid transparent;border-top:4px solid #1f3a6a"></div></div>
<div style="left:250px;top:347px;width:15px;height:16px;background:linear-gradient(#fafafa,#d8d8d8);border:1px solid #9a9a9a;border-radius:2px"><div style="left:4px;top:6px;width:0;height:0;border-left:4px solid transparent;border-right:4px solid transparent;border-top:4px solid #1f3a6a"></div></div>
<div style="left:312px;top:347px;width:15px;height:16px;background:linear-gradient(#fafafa,#d8d8d8);border:1px solid #9a9a9a;border-radius:2px"><div style="left:4px;top:6px;width:0;height:0;border-left:4px solid transparent;border-right:4px solid transparent;border-top:4px solid #1f3a6a"></div></div>
<div style="left:763px;top:347px;width:15px;height:16px;background:linear-gradient(#fafafa,#d8d8d8);border:1px solid #9a9a9a;border-radius:2px"><div style="left:4px;top:6px;width:0;height:0;border-left:4px solid transparent;border-right:4px solid transparent;border-top:4px solid #1f3a6a"></div></div>
<div style="left:1095px;top:347px;width:15px;height:16px;background:linear-gradient(#fafafa,#d8d8d8);border:1px solid #9a9a9a;border-radius:2px"><div style="left:4px;top:6px;width:0;height:0;border-left:4px solid transparent;border-right:4px solid transparent;border-top:4px solid #1f3a6a"></div></div>
<div style="left:1228px;top:347px;width:15px;height:16px;background:linear-gradient(#fafafa,#d8d8d8);border:1px solid #9a9a9a;border-radius:2px"><div style="left:4px;top:6px;width:0;height:0;border-left:4px solid transparent;border-right:4px solid transparent;border-top:4px solid #1f3a6a"></div></div>
<div style="left:1348px;top:347px;width:15px;height:16px;background:linear-gradient(#fafafa,#d8d8d8);border:1px solid #9a9a9a;border-radius:2px"><div style="left:4px;top:6px;width:0;height:0;border-left:4px solid transparent;border-right:4px solid transparent;border-top:4px solid #1f3a6a"></div></div>
<div style="left:1415px;top:347px;width:15px;height:16px;background:linear-gradient(#fafafa,#d8d8d8);border:1px solid #9a9a9a;border-radius:2px"><div style="left:4px;top:6px;width:0;height:0;border-left:4px solid transparent;border-right:4px solid transparent;border-top:4px solid #1f3a6a"></div></div>
<div style="left:1517px;top:347px;width:15px;height:16px;background:linear-gradient(#fafafa,#d8d8d8);border:1px solid #9a9a9a;border-radius:2px"><div style="left:4px;top:6px;width:0;height:0;border-left:4px solid transparent;border-right:4px solid transparent;border-top:4px solid #1f3a6a"></div></div>
<div style="left:1647px;top:347px;width:15px;height:16px;background:linear-gradient(#fafafa,#d8d8d8);border:1px solid #9a9a9a;border-radius:2px"><div style="left:4px;top:6px;width:0;height:0;border-left:4px solid transparent;border-right:4px solid transparent;border-top:4px solid #1f3a6a"></div></div>
<div style="left:1740px;top:347px;width:15px;height:16px;background:linear-gradient(#fafafa,#d8d8d8);border:1px solid #9a9a9a;border-radius:2px"><div style="left:4px;top:6px;width:0;height:0;border-left:4px solid transparent;border-right:4px solid transparent;border-top:4px solid #1f3a6a"></div></div>
<div style="left:175px;top:347px;width:15px;height:16px;background:linear-gradient(#fafafa,#d8d8d8);border:1px solid #9a9a9a;border-radius:2px"><div style="left:2px;top:9px;width:0;height:0;border-left:3px solid transparent;border-right:3px solid transparent;border-top:3px solid #1f3a6a"></div><div style="left:9px;top:3px;width:1px;height:9px;background:#1f3a6a"></div><div style="left:7px;top:10px;width:0;height:0;border-left:2.5px solid transparent;border-right:2.5px solid transparent;border-top:3px solid #1f3a6a"></div></div>
<div style="left:698px;top:347px;width:15px;height:16px;background:linear-gradient(#fafafa,#d8d8d8);border:1px solid #9a9a9a;border-radius:2px"><div style="left:2px;top:9px;width:0;height:0;border-left:3px solid transparent;border-right:3px solid transparent;border-top:3px solid #1f3a6a"></div><div style="left:9px;top:3px;width:1px;height:9px;background:#1f3a6a"></div><div style="left:7px;top:3px;width:0;height:0;border-left:2.5px solid transparent;border-right:2.5px solid transparent;border-bottom:3px solid #1f3a6a"></div></div>
<div style="left:1160px;top:347px;width:15px;height:16px;background:linear-gradient(#fafafa,#d8d8d8);border:1px solid #9a9a9a;border-radius:2px"><div style="left:2px;top:9px;width:0;height:0;border-left:3px solid transparent;border-right:3px solid transparent;border-top:3px solid #1f3a6a"></div><div style="left:9px;top:3px;width:1px;height:9px;background:#1f3a6a"></div><div style="left:7px;top:3px;width:0;height:0;border-left:2.5px solid transparent;border-right:2.5px solid transparent;border-bottom:3px solid #1f3a6a"></div></div>
<div style="left:1685px;top:347px;width:15px;height:16px;background:linear-gradient(#fafafa,#d8d8d8);border:1px solid #9a9a9a;border-radius:2px"><div style="left:2px;top:9px;width:0;height:0;border-left:3px solid transparent;border-right:3px solid transparent;border-top:3px solid #1f3a6a"></div><div style="left:9px;top:3px;width:1px;height:9px;background:#1f3a6a"></div><div style="left:7px;top:3px;width:0;height:0;border-left:2.5px solid transparent;border-right:2.5px solid transparent;border-bottom:3px solid #1f3a6a"></div></div>
<div style="left:1452px;top:347px;width:15px;height:16px;background:linear-gradient(#fafafa,#d8d8d8);border:1px solid #9a9a9a;border-radius:2px"><div style="left:2px;top:9px;width:0;height:0;border-left:3px solid transparent;border-right:3px solid transparent;border-top:3px solid #1f3a6a"></div><svg style="position:absolute;left:5px;top:2px" width="9" height="11"><path d="M0.5 0.5h8l-3 4v5l-2 1v-6z" fill="#fff" stroke="#1f3a6a" stroke-width="1"/></svg></div>
<div style="left:75px;top:304px;width:0;height:0;border-left:5px solid transparent;border-top:5px solid #f00"></div>
<div style="left:104px;top:304px;width:0;height:0;border-left:5px solid transparent;border-top:5px solid #f00"></div>
<div style="left:153px;top:304px;width:0;height:0;border-left:5px solid transparent;border-top:5px solid #f00"></div>
<div style="left:186px;top:304px;width:0;height:0;border-left:5px solid transparent;border-top:5px solid #f00"></div>
<div style="left:219px;top:304px;width:0;height:0;border-left:5px solid transparent;border-top:5px solid #f00"></div>
<div style="left:261px;top:304px;width:0;height:0;border-left:5px solid transparent;border-top:5px solid #f00"></div>
<div style="left:323px;top:304px;width:0;height:0;border-left:5px solid transparent;border-top:5px solid #f00"></div>
<div style="left:709px;top:304px;width:0;height:0;border-left:5px solid transparent;border-top:5px solid #f00"></div>
<div style="left:774px;top:304px;width:0;height:0;border-left:5px solid transparent;border-top:5px solid #f00"></div>
<div style="left:1106px;top:304px;width:0;height:0;border-left:5px solid transparent;border-top:5px solid #f00"></div>
<div style="left:1171px;top:304px;width:0;height:0;border-left:5px solid transparent;border-top:5px solid #f00"></div>
<div style="left:1239px;top:304px;width:0;height:0;border-left:5px solid transparent;border-top:5px solid #f00"></div>
<div style="left:1359px;top:304px;width:0;height:0;border-left:5px solid transparent;border-top:5px solid #f00"></div>
<div style="left:1426px;top:304px;width:0;height:0;border-left:5px solid transparent;border-top:5px solid #f00"></div>
<div style="left:1463px;top:304px;width:0;height:0;border-left:5px solid transparent;border-top:5px solid #f00"></div>
<div style="left:1658px;top:304px;width:0;height:0;border-left:5px solid transparent;border-top:5px solid #f00"></div>
<div style="left:26px;top:364px;width:1730px;height:1px;background:#fff"></div>
<div style="left:0px;top:365px;width:1761px;height:1px;background:#4a4a4a"></div>
<div style="left:0px;top:364px;width:25px;height:1px;background:#c5d3e3"></div>
<div style="left:26px;top:366px;width:1730px;height:16px;background:#dce6f1"></div>
<div style="left:26px;top:382px;width:1730px;height:1px;background:#fff"></div>
<div style="left:80px;top:366px;width:1px;height:16px;background:#fff"></div>
<div style="left:109px;top:366px;width:1px;height:16px;background:#fff"></div>
<div style="left:158px;top:366px;width:1px;height:16px;background:#fff"></div>
<div style="left:191px;top:366px;width:1px;height:16px;background:#fff"></div>
<div style="left:224px;top:366px;width:1px;height:16px;background:#fff"></div>
<div style="left:266px;top:366px;width:1px;height:16px;background:#fff"></div>
<div style="left:328px;top:366px;width:1px;height:16px;background:#fff"></div>
<div style="left:714px;top:366px;width:1px;height:16px;background:#fff"></div>
<div style="left:779px;top:366px;width:1px;height:16px;background:#fff"></div>
<div style="left:1111px;top:366px;width:1px;height:16px;background:#fff"></div>
<div style="left:1176px;top:366px;width:1px;height:16px;background:#fff"></div>
<div style="left:1244px;top:366px;width:1px;height:16px;background:#fff"></div>
<div style="left:1364px;top:366px;width:1px;height:16px;background:#fff"></div>
<div style="left:1431px;top:366px;width:1px;height:16px;background:#fff"></div>
<div style="left:1468px;top:366px;width:1px;height:16px;background:#fff"></div>
<div style="left:1533px;top:366px;width:1px;height:16px;background:#fff"></div>
<div style="left:1663px;top:366px;width:1px;height:16px;background:#fff"></div>
<div style="left:1701px;top:366px;width:1px;height:16px;background:#fff"></div>
<div style="left:0px;top:366px;width:25px;height:17px;background:#e4ecf7"></div>
<div style="left:0px;top:382px;width:25px;height:1px;#a9bdd6"></div>
<div class="c cr" style="left:-13px;top:366px;width:36px;height:16px;font-size:13px;color:#1a1aff;padding-top:1px">2283</div>
<div class="c cr" style="left:26px;top:366px;width:54px;height:16px;padding:0 2px;padding-top:1px;font-size:12px;letter-spacing:-0.6px;">2020</div>
<div class="c cc" style="left:81px;top:366px;width:28px;height:16px;padding:0 0px;padding-top:1px;background:linear-gradient(#e6ecde 0%,#b8d090 22%,#86b253 50%,#b8d090 78%,#e2e8dc 100%);font-size:13px;">S1</div>
<div class="c cc" style="left:159px;top:366px;width:32px;height:16px;padding:0 2px;padding-top:1px;font-family:'Liberation Serif',serif;font-size:13px;color:#e04a1c">E</div>
<div class="c cc" style="left:192px;top:366px;width:32px;height:16px;padding:0 0px;padding-top:1px;background:radial-gradient(ellipse 55% 75% at 50% 50%,#d8fde9 0%,#9ef6c4 45%,#3fec88 100%);font-family:'Liberation Serif',serif;font-size:13px;letter-spacing:-1px;color:#0c1a80;">AC</div>
<div class="c cc" style="left:225px;top:366px;width:41px;height:16px;padding:0 0px;padding-top:1px;background:#8db4e2;font-size:11.5px;letter-spacing:-0.4px;">20,0<span style="font-size:8.5px;letter-spacing:0">%</span></div>
<div class="c cc" style="left:267px;top:366px;width:61px;height:16px;padding:0 0px;padding-top:1px;background:linear-gradient(#f4fff4 0%,#8fe08f 30%,#22b44a 80%,#10a33a 100%);font-size:13px;">99</div>
<div class="c cl" style="left:329px;top:366px;width:385px;height:16px;padding:0 2px;padding-top:1px;font-size:13px;justify-content:flex-start">ELYSEE CAPITAL</div>
<div class="c cr" style="left:715px;top:366px;width:64px;height:16px;padding:0 3px;padding-top:1px;background:#ffe699;font-size:13px;color:#d47c00">x</div>
<div class="c cl" style="left:780px;top:366px;width:331px;height:16px;padding:0 2px;padding-top:1px;font-size:13px;justify-content:flex-start">Réseaux extérieurs batiment 5 devis 190616</div>
<div class="c cc" style="left:1177px;top:366px;width:67px;height:16px;padding:0 0px;padding-top:1px;background:#ff33cc;font-size:13px;">30/06/20</div>
<div class="c cr" style="left:1245px;top:366px;width:119px;height:16px;padding:0 18px;padding-top:1px;font-size:13px;">8 796,36</div>
<div class="c cc" style="left:1432px;top:366px;width:36px;height:16px;padding:0 2px;padding-top:1px;font-size:11.5px;">0</div>
<div class="c cc" style="left:1469px;top:366px;width:64px;height:16px;padding:0 2px;padding-top:1px;font-size:12px;">-</div>
<div class="c cr" style="left:1534px;top:366px;width:129px;height:16px;padding:0 20px;padding-top:1px;font-size:12px;">-</div>
<div class="c cc" style="left:1664px;top:366px;width:37px;height:16px;padding:0 0px;padding-top:1px;background:#e46c0a;"></div>
<div style="left:1757px;top:382px;width:4px;height:1px;background:#d0d7e5"></div>
<div style="left:26px;top:383px;width:1730px;height:16px;background:#b8cce4"></div>
<div style="left:26px;top:399px;width:1730px;height:1px;background:#fff"></div>
<div style="left:80px;top:383px;width:1px;height:16px;background:#fff"></div>
<div style="left:109px;top:383px;width:1px;height:16px;background:#fff"></div>
<div style="left:158px;top:383px;width:1px;height:16px;background:#fff"></div>
<div style="left:191px;top:383px;width:1px;height:16px;background:#fff"></div>
<div style="left:224px;top:383px;width:1px;height:16px;background:#fff"></div>
<div style="left:266px;top:383px;width:1px;height:16px;background:#fff"></div>
<div style="left:328px;top:383px;width:1px;height:16px;background:#fff"></div>
<div style="left:714px;top:383px;width:1px;height:16px;background:#fff"></div>
<div style="left:779px;top:383px;width:1px;height:16px;background:#fff"></div>
<div style="left:1111px;top:383px;width:1px;height:16px;background:#fff"></div>
<div style="left:1176px;top:383px;width:1px;height:16px;background:#fff"></div>
<div style="left:1244px;top:383px;width:1px;height:16px;background:#fff"></div>
<div style="left:1364px;top:383px;width:1px;height:16px;background:#fff"></div>
<div style="left:1431px;top:383px;width:1px;height:16px;background:#fff"></div>
<div style="left:1468px;top:383px;width:1px;height:16px;background:#fff"></div>
<div style="left:1533px;top:383px;width:1px;height:16px;background:#fff"></div>
<div style="left:1663px;top:383px;width:1px;height:16px;background:#fff"></div>
<div style="left:1701px;top:383px;width:1px;height:16px;background:#fff"></div>
<div style="left:0px;top:383px;width:25px;height:17px;background:#e4ecf7"></div>
<div style="left:0px;top:399px;width:25px;height:1px;#a9bdd6"></div>
<div class="c cr" style="left:-13px;top:383px;width:36px;height:16px;font-size:13px;color:#1a1aff;padding-top:1px">2284</div>
<div class="c cr" style="left:26px;top:383px;width:54px;height:16px;padding:0 2px;padding-top:1px;font-size:11.5px;letter-spacing:-0.9px;">2018</div>
<div class="c cc" style="left:81px;top:383px;width:28px;height:16px;padding:0 2px;padding-top:1px;font-size:13px;color:#e04a1c">1</div>
<div class="c cc" style="left:159px;top:383px;width:32px;height:16px;padding:0 2px;padding-top:1px;font-family:'Liberation Serif',serif;font-size:13px;color:#e04a1c">E</div>
<div class="c cc" style="left:192px;top:383px;width:32px;height:16px;padding:0 0px;padding-top:1px;background:radial-gradient(ellipse 55% 75% at 50% 50%,#d8fde9 0%,#9ef6c4 45%,#3fec88 100%);font-family:'Liberation Serif',serif;font-size:13px;letter-spacing:-1px;color:#0c1a80;">AC</div>
<div class="c cc" style="left:225px;top:383px;width:41px;height:16px;padding:0 0px;padding-top:1px;background:#8db4e2;font-size:11.5px;letter-spacing:-0.4px;">20,0<span style="font-size:8.5px;letter-spacing:0">%</span></div>
<div class="c cc" style="left:267px;top:383px;width:61px;height:16px;padding:0 0px;padding-top:1px;background:linear-gradient(#f4fff4 0%,#8fe08f 30%,#22b44a 80%,#10a33a 100%);font-size:13px;">99</div>
<div class="c cl" style="left:329px;top:383px;width:385px;height:16px;padding:0 2px;padding-top:1px;font-size:13px;justify-content:flex-start">ERIS ENVIRONNEMENT</div>
<div class="c cr" style="left:715px;top:383px;width:64px;height:16px;padding:0 3px;padding-top:1px;background:#ffe699;font-size:13px;color:#d47c00">x</div>
<div class="c cl" style="left:780px;top:383px;width:331px;height:16px;padding:0 2px;padding-top:1px;font-size:13px;justify-content:flex-start">Pressac</div>
<div class="c cc" style="left:1112px;top:383px;width:64px;height:16px;padding:0 2px;padding-top:1px;font-size:13px;color:#e04a1c">31/1</div>
<div class="c cc" style="left:1177px;top:383px;width:67px;height:16px;padding:0 0px;padding-top:1px;font-size:13px;">31/01/18</div>
<div class="c cr" style="left:1245px;top:383px;width:119px;height:16px;padding:0 18px;padding-top:1px;font-size:13px;">500,00</div>
<div class="c cc" style="left:1432px;top:383px;width:36px;height:16px;padding:0 2px;padding-top:1px;font-size:11.5px;">0</div>
<div class="c cc" style="left:1469px;top:383px;width:64px;height:16px;padding:0 2px;padding-top:1px;font-size:12px;">-</div>
<div class="c cr" style="left:1534px;top:383px;width:129px;height:16px;padding:0 20px;padding-top:1px;font-size:12px;">-</div>
<div style="left:1757px;top:399px;width:4px;height:1px;background:#d0d7e5"></div>
<div style="left:26px;top:400px;width:1730px;height:16px;background:#dce6f1"></div>
<div style="left:26px;top:416px;width:1730px;height:1px;background:#fff"></div>
<div style="left:80px;top:400px;width:1px;height:16px;background:#fff"></div>
<div style="left:109px;top:400px;width:1px;height:16px;background:#fff"></div>
<div style="left:158px;top:400px;width:1px;height:16px;background:#fff"></div>
<div style="left:191px;top:400px;width:1px;height:16px;background:#fff"></div>
<div style="left:224px;top:400px;width:1px;height:16px;background:#fff"></div>
<div style="left:266px;top:400px;width:1px;height:16px;background:#fff"></div>
<div style="left:328px;top:400px;width:1px;height:16px;background:#fff"></div>
<div style="left:714px;top:400px;width:1px;height:16px;background:#fff"></div>
<div style="left:779px;top:400px;width:1px;height:16px;background:#fff"></div>
<div style="left:1111px;top:400px;width:1px;height:16px;background:#fff"></div>
<div style="left:1176px;top:400px;width:1px;height:16px;background:#fff"></div>
<div style="left:1244px;top:400px;width:1px;height:16px;background:#fff"></div>
<div style="left:1364px;top:400px;width:1px;height:16px;background:#fff"></div>
<div style="left:1431px;top:400px;width:1px;height:16px;background:#fff"></div>
<div style="left:1468px;top:400px;width:1px;height:16px;background:#fff"></div>
<div style="left:1533px;top:400px;width:1px;height:16px;background:#fff"></div>
<div style="left:1663px;top:400px;width:1px;height:16px;background:#fff"></div>
<div style="left:1701px;top:400px;width:1px;height:16px;background:#fff"></div>
<div style="left:0px;top:400px;width:25px;height:17px;background:#e4ecf7"></div>
<div style="left:0px;top:416px;width:25px;height:1px;#a9bdd6"></div>
<div class="c cr" style="left:-13px;top:400px;width:36px;height:16px;font-size:13px;color:#1a1aff;padding-top:1px">2285</div>
<div class="c cr" style="left:26px;top:400px;width:54px;height:16px;padding:0 2px;padding-top:1px;font-size:12px;letter-spacing:-0.6px;">2020</div>
<div class="c cc" style="left:81px;top:400px;width:28px;height:16px;padding:0 2px;padding-top:1px;font-size:13px;color:#e04a1c">1</div>
<div class="c cc" style="left:159px;top:400px;width:32px;height:16px;padding:0 2px;padding-top:1px;font-family:'Liberation Serif',serif;font-size:13px;color:#e04a1c">E</div>
<div class="c cc" style="left:192px;top:400px;width:32px;height:16px;padding:0 0px;padding-top:1px;background:radial-gradient(ellipse 55% 75% at 50% 50%,#d8fde9 0%,#9ef6c4 45%,#3fec88 100%);font-family:'Liberation Serif',serif;font-size:13px;letter-spacing:-1px;color:#0c1a80;">AC</div>
<div class="c cc" style="left:225px;top:400px;width:41px;height:16px;padding:0 0px;padding-top:1px;background:#8db4e2;font-size:11.5px;letter-spacing:-0.4px;">20,0<span style="font-size:8.5px;letter-spacing:0">%</span></div>
<div class="c cc" style="left:267px;top:400px;width:61px;height:16px;padding:0 0px;padding-top:1px;background:linear-gradient(#f4fff4 0%,#8fe08f 30%,#22b44a 80%,#10a33a 100%);font-size:13px;">99</div>
<div class="c cl" style="left:329px;top:400px;width:385px;height:16px;padding:0 2px;padding-top:1px;font-size:13px;justify-content:flex-start">ERIS ENVIRONNEMENT</div>
<div class="c cr" style="left:715px;top:400px;width:64px;height:16px;padding:0 3px;padding-top:1px;background:#ffe699;font-size:13px;color:#d47c00">x</div>
<div class="c cl" style="left:780px;top:400px;width:331px;height:16px;padding:0 2px;padding-top:1px;font-size:13px;justify-content:flex-start">Prêt personnel</div>
<div class="c cc" style="left:1177px;top:400px;width:67px;height:16px;padding:0 0px;padding-top:1px;background:#ff33cc;font-size:13px;">30/06/20</div>
<div class="c cr" style="left:1245px;top:400px;width:119px;height:16px;padding:0 31px;padding-top:1px;font-size:13px;">-</div>
<div class="c cc" style="left:1432px;top:400px;width:36px;height:16px;padding:0 2px;padding-top:1px;font-size:11.5px;">0</div>
<div class="c cc" style="left:1469px;top:400px;width:64px;height:16px;padding:0 2px;padding-top:1px;font-size:12px;">-</div>
<div class="c cr" style="left:1534px;top:400px;width:129px;height:16px;padding:0 20px;padding-top:1px;font-size:12px;">-</div>
<div style="left:1757px;top:416px;width:4px;height:1px;background:#d0d7e5"></div>
<div style="left:26px;top:417px;width:1730px;height:16px;background:#b8cce4"></div>
<div style="left:26px;top:433px;width:1730px;height:1px;background:#fff"></div>
<div style="left:80px;top:417px;width:1px;height:16px;background:#fff"></div>
<div style="left:109px;top:417px;width:1px;height:16px;background:#fff"></div>
<div style="left:158px;top:417px;width:1px;height:16px;background:#fff"></div>
<div style="left:191px;top:417px;width:1px;height:16px;background:#fff"></div>
<div style="left:224px;top:417px;width:1px;height:16px;background:#fff"></div>
<div style="left:266px;top:417px;width:1px;height:16px;background:#fff"></div>
<div style="left:328px;top:417px;width:1px;height:16px;background:#fff"></div>
<div style="left:714px;top:417px;width:1px;height:16px;background:#fff"></div>
<div style="left:779px;top:417px;width:1px;height:16px;background:#fff"></div>
<div style="left:1111px;top:417px;width:1px;height:16px;background:#fff"></div>
<div style="left:1176px;top:417px;width:1px;height:16px;background:#fff"></div>
<div style="left:1244px;top:417px;width:1px;height:16px;background:#fff"></div>
<div style="left:1364px;top:417px;width:1px;height:16px;background:#fff"></div>
<div style="left:1431px;top:417px;width:1px;height:16px;background:#fff"></div>
<div style="left:1468px;top:417px;width:1px;height:16px;background:#fff"></div>
<div style="left:1533px;top:417px;width:1px;height:16px;background:#fff"></div>
<div style="left:1663px;top:417px;width:1px;height:16px;background:#fff"></div>
<div style="left:1701px;top:417px;width:1px;height:16px;background:#fff"></div>
<div style="left:0px;top:417px;width:25px;height:17px;background:#e4ecf7"></div>
<div style="left:0px;top:433px;width:25px;height:1px;#a9bdd6"></div>
<div class="c cr" style="left:-13px;top:417px;width:36px;height:16px;font-size:13px;color:#1a1aff;padding-top:1px">2286</div>
<div class="c cr" style="left:26px;top:417px;width:54px;height:16px;padding:0 2px;padding-top:1px;font-size:11.5px;letter-spacing:-0.9px;">2019</div>
<div class="c cc" style="left:81px;top:417px;width:28px;height:16px;padding:0 2px;padding-top:1px;font-size:13px;color:#e04a1c">1</div>
<div class="c cc" style="left:159px;top:417px;width:32px;height:16px;padding:0 2px;padding-top:1px;font-family:'Liberation Serif',serif;font-size:13px;color:#e04a1c">E</div>
<div class="c cc" style="left:192px;top:417px;width:32px;height:16px;padding:0 0px;padding-top:1px;background:radial-gradient(ellipse 55% 75% at 50% 50%,#d8fde9 0%,#9ef6c4 45%,#3fec88 100%);font-family:'Liberation Serif',serif;font-size:13px;letter-spacing:-1px;color:#0c1a80;">AC</div>
<div class="c cc" style="left:225px;top:417px;width:41px;height:16px;padding:0 0px;padding-top:1px;background:#8db4e2;font-size:11.5px;letter-spacing:-0.4px;">20,0<span style="font-size:8.5px;letter-spacing:0">%</span></div>
<div class="c cc" style="left:267px;top:417px;width:61px;height:16px;padding:0 0px;padding-top:1px;background:linear-gradient(#f4fff4 0%,#8fe08f 30%,#22b44a 80%,#10a33a 100%);font-size:13px;">99</div>
<div class="c cl" style="left:329px;top:417px;width:385px;height:16px;padding:0 2px;padding-top:1px;font-size:13px;justify-content:flex-start">Faidy</div>
<div class="c cr" style="left:715px;top:417px;width:64px;height:16px;padding:0 3px;padding-top:1px;background:#ffe699;font-size:13px;color:#d47c00">x</div>
<div class="c cl" style="left:780px;top:417px;width:331px;height:16px;padding:0 2px;padding-top:1px;font-size:13px;justify-content:flex-start">Reparation garantie</div>
<div class="c cc" style="left:1112px;top:417px;width:64px;height:16px;padding:0 2px;padding-top:1px;font-size:13px;color:#e04a1c">21/12</div>
<div class="c cc" style="left:1177px;top:417px;width:67px;height:16px;padding:0 0px;padding-top:1px;font-size:13px;">21/12/18</div>
<div class="c cr" style="left:1245px;top:417px;width:119px;height:16px;padding:0 18px;padding-top:1px;font-size:13px;">300,00</div>
<div class="c cc" style="left:1432px;top:417px;width:36px;height:16px;padding:0 2px;padding-top:1px;font-size:11.5px;">0</div>
<div class="c cc" style="left:1469px;top:417px;width:64px;height:16px;padding:0 2px;padding-top:1px;font-size:12px;">-</div>
<div class="c cr" style="left:1534px;top:417px;width:129px;height:16px;padding:0 20px;padding-top:1px;font-size:12px;">-</div>
<div style="left:1757px;top:433px;width:4px;height:1px;background:#d0d7e5"></div>
<div style="left:26px;top:434px;width:1730px;height:16px;background:#dce6f1"></div>
<div style="left:26px;top:450px;width:1730px;height:1px;background:#fff"></div>
<div style="left:80px;top:434px;width:1px;height:16px;background:#fff"></div>
<div style="left:109px;top:434px;width:1px;height:16px;background:#fff"></div>
<div style="left:158px;top:434px;width:1px;height:16px;background:#fff"></div>
<div style="left:191px;top:434px;width:1px;height:16px;background:#fff"></div>
<div style="left:224px;top:434px;width:1px;height:16px;background:#fff"></div>
<div style="left:266px;top:434px;width:1px;height:16px;background:#fff"></div>
<div style="left:328px;top:434px;width:1px;height:16px;background:#fff"></div>
<div style="left:714px;top:434px;width:1px;height:16px;background:#fff"></div>
<div style="left:779px;top:434px;width:1px;height:16px;background:#fff"></div>
<div style="left:1111px;top:434px;width:1px;height:16px;background:#fff"></div>
<div style="left:1176px;top:434px;width:1px;height:16px;background:#fff"></div>
<div style="left:1244px;top:434px;width:1px;height:16px;background:#fff"></div>
<div style="left:1364px;top:434px;width:1px;height:16px;background:#fff"></div>
<div style="left:1431px;top:434px;width:1px;height:16px;background:#fff"></div>
<div style="left:1468px;top:434px;width:1px;height:16px;background:#fff"></div>
<div style="left:1533px;top:434px;width:1px;height:16px;background:#fff"></div>
<div style="left:1663px;top:434px;width:1px;height:16px;background:#fff"></div>
<div style="left:1701px;top:434px;width:1px;height:16px;background:#fff"></div>
<div style="left:0px;top:434px;width:25px;height:17px;background:#e4ecf7"></div>
<div style="left:0px;top:450px;width:25px;height:1px;#a9bdd6"></div>
<div class="c cr" style="left:-13px;top:434px;width:36px;height:16px;font-size:13px;color:#1a1aff;padding-top:1px">2287</div>
<div class="c cr" style="left:26px;top:434px;width:54px;height:16px;padding:0 2px;padding-top:1px;font-size:11.5px;letter-spacing:-0.9px;">2019</div>
<div class="c cc" style="left:81px;top:434px;width:28px;height:16px;padding:0 2px;padding-top:1px;font-size:13px;color:#e04a1c">1</div>
<div class="c cc" style="left:159px;top:434px;width:32px;height:16px;padding:0 2px;padding-top:1px;font-family:'Liberation Serif',serif;font-size:13px;color:#e04a1c">E</div>
<div class="c cc" style="left:192px;top:434px;width:32px;height:16px;padding:0 0px;padding-top:1px;background:radial-gradient(ellipse 55% 75% at 50% 50%,#d8fde9 0%,#9ef6c4 45%,#3fec88 100%);font-family:'Liberation Serif',serif;font-size:13px;letter-spacing:-1px;color:#0c1a80;">AC</div>
<div class="c cc" style="left:225px;top:434px;width:41px;height:16px;padding:0 0px;padding-top:1px;background:#8db4e2;font-size:11.5px;letter-spacing:-0.4px;">20,0<span style="font-size:8.5px;letter-spacing:0">%</span></div>
<div class="c cc" style="left:267px;top:434px;width:61px;height:16px;padding:0 0px;padding-top:1px;background:linear-gradient(#f4fff4 0%,#8fe08f 30%,#22b44a 80%,#10a33a 100%);font-size:13px;">99</div>
<div class="c cl" style="left:329px;top:434px;width:385px;height:16px;padding:0 2px;padding-top:1px;font-size:13px;justify-content:flex-start">FRADIN J 0602638137</div>
<div class="c cr" style="left:715px;top:434px;width:64px;height:16px;padding:0 3px;padding-top:1px;background:#ffe699;font-size:13px;color:#d47c00">x</div>
<div class="c cl" style="left:780px;top:434px;width:331px;height:16px;padding:0 2px;padding-top:1px;font-size:13px;justify-content:flex-start">RSD Réparations</div>
<div class="c cc" style="left:1177px;top:434px;width:67px;height:16px;padding:0 0px;padding-top:1px;font-size:13px;">24/05/19</div>
<div class="c cr" style="left:1245px;top:434px;width:119px;height:16px;padding:0 31px;padding-top:1px;font-size:13px;">-</div>
<div class="c cc" style="left:1432px;top:434px;width:36px;height:16px;padding:0 2px;padding-top:1px;font-size:11.5px;">0</div>
<div class="c cc" style="left:1469px;top:434px;width:64px;height:16px;padding:0 2px;padding-top:1px;font-size:12px;">-</div>
<div class="c cr" style="left:1534px;top:434px;width:129px;height:16px;padding:0 20px;padding-top:1px;font-size:12px;">-</div>
<div class="c cc" style="left:1702px;top:434px;width:54px;height:16px;padding:0 2px;padding-top:1px;font-size:12.5px;letter-spacing:-0.2px;color:#d4401c;padding-top:2px">783</div>
<div style="left:1757px;top:450px;width:4px;height:1px;background:#d0d7e5"></div>
<div style="left:26px;top:451px;width:1730px;height:16px;background:#b8cce4"></div>
<div style="left:26px;top:467px;width:1730px;height:1px;background:#fff"></div>
<div style="left:80px;top:451px;width:1px;height:16px;background:#fff"></div>
<div style="left:109px;top:451px;width:1px;height:16px;background:#fff"></div>
<div style="left:158px;top:451px;width:1px;height:16px;background:#fff"></div>
<div style="left:191px;top:451px;width:1px;height:16px;background:#fff"></div>
<div style="left:224px;top:451px;width:1px;height:16px;background:#fff"></div>
<div style="left:266px;top:451px;width:1px;height:16px;background:#fff"></div>
<div style="left:328px;top:451px;width:1px;height:16px;background:#fff"></div>
<div style="left:714px;top:451px;width:1px;height:16px;background:#fff"></div>
<div style="left:779px;top:451px;width:1px;height:16px;background:#fff"></div>
<div style="left:1111px;top:451px;width:1px;height:16px;background:#fff"></div>
<div style="left:1176px;top:451px;width:1px;height:16px;background:#fff"></div>
<div style="left:1244px;top:451px;width:1px;height:16px;background:#fff"></div>
<div style="left:1364px;top:451px;width:1px;height:16px;background:#fff"></div>
<div style="left:1431px;top:451px;width:1px;height:16px;background:#fff"></div>
<div style="left:1468px;top:451px;width:1px;height:16px;background:#fff"></div>
<div style="left:1533px;top:451px;width:1px;height:16px;background:#fff"></div>
<div style="left:1663px;top:451px;width:1px;height:16px;background:#fff"></div>
<div style="left:1701px;top:451px;width:1px;height:16px;background:#fff"></div>
<div style="left:0px;top:451px;width:25px;height:17px;background:#e4ecf7"></div>
<div style="left:0px;top:467px;width:25px;height:1px;#a9bdd6"></div>
<div class="c cr" style="left:-13px;top:451px;width:36px;height:16px;font-size:13px;color:#1a1aff;padding-top:1px">2288</div>
<div class="c cr" style="left:26px;top:451px;width:54px;height:16px;padding:0 2px;padding-top:1px;font-size:11.5px;letter-spacing:-0.9px;">2019</div>
<div class="c cc" style="left:81px;top:451px;width:28px;height:16px;padding:0 2px;padding-top:1px;font-size:13px;color:#e04a1c">1</div>
<div class="c cc" style="left:159px;top:451px;width:32px;height:16px;padding:0 2px;padding-top:1px;font-family:'Liberation Serif',serif;font-size:13px;color:#e04a1c">E</div>
<div class="c cc" style="left:192px;top:451px;width:32px;height:16px;padding:0 0px;padding-top:1px;background:radial-gradient(ellipse 55% 75% at 50% 50%,#d8fde9 0%,#9ef6c4 45%,#3fec88 100%);font-family:'Liberation Serif',serif;font-size:13px;letter-spacing:-1px;color:#0c1a80;">AC</div>
<div class="c cc" style="left:225px;top:451px;width:41px;height:16px;padding:0 0px;padding-top:1px;background:#8db4e2;font-size:11.5px;letter-spacing:-0.4px;">20,0<span style="font-size:8.5px;letter-spacing:0">%</span></div>
<div class="c cc" style="left:267px;top:451px;width:61px;height:16px;padding:0 0px;padding-top:1px;background:linear-gradient(#f4fff4 0%,#8fe08f 30%,#22b44a 80%,#10a33a 100%);font-size:13px;">99</div>
<div class="c cl" style="left:329px;top:451px;width:385px;height:16px;padding:0 2px;padding-top:1px;font-size:13px;justify-content:flex-start">Froget Jacky&nbsp; 0686493442</div>
<div class="c cr" style="left:715px;top:451px;width:64px;height:16px;padding:0 3px;padding-top:1px;background:#ffe699;font-size:13px;color:#d47c00">x</div>
<div class="c cl" style="left:780px;top:451px;width:331px;height:16px;padding:0 2px;padding-top:1px;font-size:13px;justify-content:flex-start">RD FROGET Drain bouché tx avant oct 2018</div>
<div class="c cc" style="left:1112px;top:451px;width:64px;height:16px;padding:0 2px;padding-top:1px;font-size:13px;color:#e04a1c">10/4</div>
<div class="c cc" style="left:1177px;top:451px;width:67px;height:16px;padding:0 0px;padding-top:1px;font-size:13px;">10/04/19</div>
<div class="c cr" style="left:1245px;top:451px;width:119px;height:16px;padding:0 18px;padding-top:1px;font-size:13px;">100,00</div>
<div class="c cc" style="left:1432px;top:451px;width:36px;height:16px;padding:0 2px;padding-top:1px;font-size:11.5px;">0</div>
<div class="c cc" style="left:1469px;top:451px;width:64px;height:16px;padding:0 2px;padding-top:1px;font-size:12px;">-</div>
<div class="c cr" style="left:1534px;top:451px;width:129px;height:16px;padding:0 20px;padding-top:1px;font-size:12px;">-</div>
<div class="c cc" style="left:1702px;top:451px;width:54px;height:16px;padding:0 2px;padding-top:1px;font-size:12.5px;letter-spacing:-0.2px;color:#d4401c;padding-top:2px">559</div>
<div style="left:1757px;top:467px;width:4px;height:1px;background:#d0d7e5"></div>
<div style="left:26px;top:468px;width:1730px;height:16px;background:#dce6f1"></div>
<div style="left:26px;top:484px;width:1730px;height:1px;background:#fff"></div>
<div style="left:80px;top:468px;width:1px;height:16px;background:#fff"></div>
<div style="left:109px;top:468px;width:1px;height:16px;background:#fff"></div>
<div style="left:158px;top:468px;width:1px;height:16px;background:#fff"></div>
<div style="left:191px;top:468px;width:1px;height:16px;background:#fff"></div>
<div style="left:224px;top:468px;width:1px;height:16px;background:#fff"></div>
<div style="left:266px;top:468px;width:1px;height:16px;background:#fff"></div>
<div style="left:328px;top:468px;width:1px;height:16px;background:#fff"></div>
<div style="left:714px;top:468px;width:1px;height:16px;background:#fff"></div>
<div style="left:779px;top:468px;width:1px;height:16px;background:#fff"></div>
<div style="left:1111px;top:468px;width:1px;height:16px;background:#fff"></div>
<div style="left:1176px;top:468px;width:1px;height:16px;background:#fff"></div>
<div style="left:1244px;top:468px;width:1px;height:16px;background:#fff"></div>
<div style="left:1364px;top:468px;width:1px;height:16px;background:#fff"></div>
<div style="left:1431px;top:468px;width:1px;height:16px;background:#fff"></div>
<div style="left:1468px;top:468px;width:1px;height:16px;background:#fff"></div>
<div style="left:1533px;top:468px;width:1px;height:16px;background:#fff"></div>
<div style="left:1663px;top:468px;width:1px;height:16px;background:#fff"></div>
<div style="left:1701px;top:468px;width:1px;height:16px;background:#fff"></div>
<div style="left:0px;top:468px;width:25px;height:17px;background:#e4ecf7"></div>
<div style="left:0px;top:484px;width:25px;height:1px;#a9bdd6"></div>
<div class="c cr" style="left:-13px;top:468px;width:36px;height:16px;font-size:13px;color:#1a1aff;padding-top:1px">2289</div>
<div class="c cr" style="left:26px;top:468px;width:54px;height:16px;padding:0 2px;padding-top:1px;font-size:11.5px;letter-spacing:-0.9px;">2018</div>
<div class="c cc" style="left:81px;top:468px;width:28px;height:16px;padding:0 2px;padding-top:1px;font-size:13px;color:#e04a1c">3</div>
<div class="c cc" style="left:159px;top:468px;width:32px;height:16px;padding:0 2px;padding-top:1px;font-family:'Liberation Serif',serif;font-size:13px;color:#e04a1c">E</div>
<div class="c cc" style="left:192px;top:468px;width:32px;height:16px;padding:0 0px;padding-top:1px;background:radial-gradient(ellipse 55% 75% at 50% 50%,#d8fde9 0%,#9ef6c4 45%,#3fec88 100%);font-family:'Liberation Serif',serif;font-size:13px;letter-spacing:-1px;color:#0c1a80;">AC</div>
<div class="c cc" style="left:225px;top:468px;width:41px;height:16px;padding:0 0px;padding-top:1px;background:#8db4e2;font-size:11.5px;letter-spacing:-0.4px;">20,0<span style="font-size:8.5px;letter-spacing:0">%</span></div>
<div class="c cc" style="left:267px;top:468px;width:61px;height:16px;padding:0 0px;padding-top:1px;background:linear-gradient(#f4fff4 0%,#8fe08f 30%,#22b44a 80%,#10a33a 100%);font-size:13px;">99</div>
<div class="c cl" style="left:329px;top:468px;width:385px;height:16px;padding:0 2px;padding-top:1px;font-size:13px;justify-content:flex-start">J M J</div>
<div class="c cr" style="left:715px;top:468px;width:64px;height:16px;padding:0 3px;padding-top:1px;background:#ffe699;font-size:13px;color:#d47c00">x</div>
<div class="c cl" style="left:780px;top:468px;width:331px;height:16px;padding:0 2px;padding-top:1px;font-size:13px;justify-content:flex-start">CROUTELLE déblais n-2</div>
<div class="c cc" style="left:1112px;top:468px;width:64px;height:16px;padding:0 2px;padding-top:1px;font-size:13px;color:#e04a1c">2/7</div>
<div class="c cc" style="left:1177px;top:468px;width:67px;height:16px;padding:0 0px;padding-top:1px;font-size:13px;">02/07/17</div>
<div class="c cr" style="left:1245px;top:468px;width:119px;height:16px;padding:0 18px;padding-top:1px;font-size:13px;">12 439,20</div>
<div class="c cc" style="left:1432px;top:468px;width:36px;height:16px;padding:0 2px;padding-top:1px;font-size:11.5px;">0</div>
<div class="c cc" style="left:1469px;top:468px;width:64px;height:16px;padding:0 2px;padding-top:1px;font-size:12px;">-</div>
<div class="c cr" style="left:1534px;top:468px;width:129px;height:16px;padding:0 20px;padding-top:1px;font-size:12px;">-</div>
<div style="left:1757px;top:484px;width:4px;height:1px;background:#d0d7e5"></div>
<div style="left:26px;top:485px;width:1730px;height:16px;background:#b8cce4"></div>
<div style="left:26px;top:501px;width:1730px;height:1px;background:#fff"></div>
<div style="left:80px;top:485px;width:1px;height:16px;background:#fff"></div>
<div style="left:109px;top:485px;width:1px;height:16px;background:#fff"></div>
<div style="left:158px;top:485px;width:1px;height:16px;background:#fff"></div>
<div style="left:191px;top:485px;width:1px;height:16px;background:#fff"></div>
<div style="left:224px;top:485px;width:1px;height:16px;background:#fff"></div>
<div style="left:266px;top:485px;width:1px;height:16px;background:#fff"></div>
<div style="left:328px;top:485px;width:1px;height:16px;background:#fff"></div>
<div style="left:714px;top:485px;width:1px;height:16px;background:#fff"></div>
<div style="left:779px;top:485px;width:1px;height:16px;background:#fff"></div>
<div style="left:1111px;top:485px;width:1px;height:16px;background:#fff"></div>
<div style="left:1176px;top:485px;width:1px;height:16px;background:#fff"></div>
<div style="left:1244px;top:485px;width:1px;height:16px;background:#fff"></div>
<div style="left:1364px;top:485px;width:1px;height:16px;background:#fff"></div>
<div style="left:1431px;top:485px;width:1px;height:16px;background:#fff"></div>
<div style="left:1468px;top:485px;width:1px;height:16px;background:#fff"></div>
<div style="left:1533px;top:485px;width:1px;height:16px;background:#fff"></div>
<div style="left:1663px;top:485px;width:1px;height:16px;background:#fff"></div>
<div style="left:1701px;top:485px;width:1px;height:16px;background:#fff"></div>
<div style="left:0px;top:485px;width:25px;height:17px;background:#e4ecf7"></div>
<div style="left:0px;top:501px;width:25px;height:1px;#a9bdd6"></div>
<div class="c cr" style="left:-13px;top:485px;width:36px;height:16px;font-size:13px;color:#1a1aff;padding-top:1px">2290</div>
<div class="c cr" style="left:26px;top:485px;width:54px;height:16px;padding:0 2px;padding-top:1px;font-size:11.5px;letter-spacing:-0.9px;">2019</div>
<div class="c cc" style="left:81px;top:485px;width:28px;height:16px;padding:0 2px;padding-top:1px;font-size:13px;color:#e04a1c">5</div>
<div class="c cc" style="left:159px;top:485px;width:32px;height:16px;padding:0 2px;padding-top:1px;font-family:'Liberation Serif',serif;font-size:13px;color:#e04a1c">E</div>
<div class="c cc" style="left:192px;top:485px;width:32px;height:16px;padding:0 0px;padding-top:1px;background:radial-gradient(ellipse 55% 75% at 50% 50%,#d8fde9 0%,#9ef6c4 45%,#3fec88 100%);font-family:'Liberation Serif',serif;font-size:13px;letter-spacing:-1px;color:#0c1a80;">AC</div>
<div class="c cc" style="left:225px;top:485px;width:41px;height:16px;padding:0 0px;padding-top:1px;background:#8db4e2;font-size:11.5px;letter-spacing:-0.4px;">20,0<span style="font-size:8.5px;letter-spacing:0">%</span></div>
<div class="c cc" style="left:267px;top:485px;width:61px;height:16px;padding:0 0px;padding-top:1px;background:linear-gradient(#f4fff4 0%,#8fe08f 30%,#22b44a 80%,#10a33a 100%);font-size:13px;">99</div>
<div class="c cl" style="left:329px;top:485px;width:385px;height:16px;padding:0 2px;padding-top:1px;font-size:13px;justify-content:flex-start">J M J</div>
<div class="c cr" style="left:715px;top:485px;width:64px;height:16px;padding:0 3px;padding-top:1px;background:#ffe699;font-size:13px;color:#d47c00">x</div>
<div class="c cl" style="left:780px;top:485px;width:331px;height:16px;padding:0 2px;padding-top:1px;font-size:13px;justify-content:flex-start">LOT LA SAULAIE divers</div>
<div class="c cc" style="left:1112px;top:485px;width:64px;height:16px;padding:0 2px;padding-top:1px;font-size:13px;color:#e04a1c">21/12</div>
<div class="c cc" style="left:1177px;top:485px;width:67px;height:16px;padding:0 0px;padding-top:1px;font-size:13px;">21/12/18</div>
<div class="c cr" style="left:1245px;top:485px;width:119px;height:16px;padding:0 18px;padding-top:1px;font-size:13px;">5 000,00</div>
<div class="c cc" style="left:1432px;top:485px;width:36px;height:16px;padding:0 2px;padding-top:1px;font-size:11.5px;">0</div>
<div class="c cc" style="left:1469px;top:485px;width:64px;height:16px;padding:0 2px;padding-top:1px;font-size:12px;">-</div>
<div class="c cr" style="left:1534px;top:485px;width:129px;height:16px;padding:0 20px;padding-top:1px;font-size:12px;">-</div>
<div style="left:1757px;top:501px;width:4px;height:1px;background:#d0d7e5"></div>
<div style="left:26px;top:502px;width:1730px;height:16px;background:#dce6f1"></div>
<div style="left:26px;top:518px;width:1730px;height:1px;background:#fff"></div>
<div style="left:80px;top:502px;width:1px;height:16px;background:#fff"></div>
<div style="left:109px;top:502px;width:1px;height:16px;background:#fff"></div>
<div style="left:158px;top:502px;width:1px;height:16px;background:#fff"></div>
<div style="left:191px;top:502px;width:1px;height:16px;background:#fff"></div>
<div style="left:224px;top:502px;width:1px;height:16px;background:#fff"></div>
<div style="left:266px;top:502px;width:1px;height:16px;background:#fff"></div>
<div style="left:328px;top:502px;width:1px;height:16px;background:#fff"></div>
<div style="left:714px;top:502px;width:1px;height:16px;background:#fff"></div>
<div style="left:779px;top:502px;width:1px;height:16px;background:#fff"></div>
<div style="left:1111px;top:502px;width:1px;height:16px;background:#fff"></div>
<div style="left:1176px;top:502px;width:1px;height:16px;background:#fff"></div>
<div style="left:1244px;top:502px;width:1px;height:16px;background:#fff"></div>
<div style="left:1364px;top:502px;width:1px;height:16px;background:#fff"></div>
<div style="left:1431px;top:502px;width:1px;height:16px;background:#fff"></div>
<div style="left:1468px;top:502px;width:1px;height:16px;background:#fff"></div>
<div style="left:1533px;top:502px;width:1px;height:16px;background:#fff"></div>
<div style="left:1663px;top:502px;width:1px;height:16px;background:#fff"></div>
<div style="left:1701px;top:502px;width:1px;height:16px;background:#fff"></div>
<div style="left:0px;top:502px;width:25px;height:17px;background:#e4ecf7"></div>
<div style="left:0px;top:518px;width:25px;height:1px;#a9bdd6"></div>
<div class="c cr" style="left:-13px;top:502px;width:36px;height:16px;font-size:13px;color:#1a1aff;padding-top:1px">2291</div>
<div class="c cr" style="left:26px;top:502px;width:54px;height:16px;padding:0 2px;padding-top:1px;font-size:12px;letter-spacing:-0.6px;">2020</div>
<div class="c cc" style="left:81px;top:502px;width:28px;height:16px;padding:0 2px;padding-top:1px;font-size:13px;color:#e04a1c">1</div>
<div class="c cc" style="left:159px;top:502px;width:32px;height:16px;padding:0 2px;padding-top:1px;font-family:'Liberation Serif',serif;font-size:13px;color:#e04a1c">E</div>
<div class="c cc" style="left:192px;top:502px;width:32px;height:16px;padding:0 0px;padding-top:1px;background:radial-gradient(ellipse 55% 75% at 50% 50%,#d8fde9 0%,#9ef6c4 45%,#3fec88 100%);font-family:'Liberation Serif',serif;font-size:13px;letter-spacing:-1px;color:#0c1a80;">AC</div>
<div class="c cc" style="left:225px;top:502px;width:41px;height:16px;padding:0 0px;padding-top:1px;background:#8db4e2;font-size:11.5px;letter-spacing:-0.4px;">20,0<span style="font-size:8.5px;letter-spacing:0">%</span></div>
<div class="c cc" style="left:267px;top:502px;width:61px;height:16px;padding:0 0px;padding-top:1px;background:linear-gradient(#f4fff4 0%,#8fe08f 30%,#22b44a 80%,#10a33a 100%);font-size:13px;">99</div>
<div class="c cl" style="left:329px;top:502px;width:385px;height:16px;padding:0 2px;padding-top:1px;font-size:13px;justify-content:flex-start">LEGLANTIER Victor&nbsp; *0671113633&nbsp; 86 SAULGÉ</div>
<div class="c cr" style="left:715px;top:502px;width:64px;height:16px;padding:0 3px;padding-top:1px;background:#ffe699;font-size:13px;color:#d47c00">x</div>
<div class="c cl" style="left:780px;top:502px;width:331px;height:16px;padding:0 2px;padding-top:1px;font-size:13px;justify-content:flex-start">RSD Réparations</div>
<div class="c cc" style="left:1177px;top:502px;width:67px;height:16px;padding:0 0px;padding-top:1px;background:#ff33cc;font-size:13px;">30/06/20</div>
<div class="c cr" style="left:1245px;top:502px;width:119px;height:16px;padding:0 31px;padding-top:1px;font-size:13px;">-</div>
<div class="c cc" style="left:1432px;top:502px;width:36px;height:16px;padding:0 2px;padding-top:1px;font-size:11.5px;">0</div>
<div class="c cc" style="left:1469px;top:502px;width:64px;height:16px;padding:0 2px;padding-top:1px;font-size:12px;">-</div>
<div class="c cr" style="left:1534px;top:502px;width:129px;height:16px;padding:0 20px;padding-top:1px;font-size:12px;">-</div>
<div class="c cc" style="left:1702px;top:502px;width:54px;height:16px;padding:0 2px;padding-top:1px;font-size:12.5px;letter-spacing:-0.2px;color:#d4401c;padding-top:2px">806</div>
<div style="left:1757px;top:518px;width:4px;height:1px;background:#d0d7e5"></div>
<div style="left:26px;top:519px;width:1730px;height:16px;background:#b8cce4"></div>
<div style="left:26px;top:535px;width:1730px;height:1px;background:#fff"></div>
<div style="left:80px;top:519px;width:1px;height:16px;background:#fff"></div>
<div style="left:109px;top:519px;width:1px;height:16px;background:#fff"></div>
<div style="left:158px;top:519px;width:1px;height:16px;background:#fff"></div>
<div style="left:191px;top:519px;width:1px;height:16px;background:#fff"></div>
<div style="left:224px;top:519px;width:1px;height:16px;background:#fff"></div>
<div style="left:266px;top:519px;width:1px;height:16px;background:#fff"></div>
<div style="left:328px;top:519px;width:1px;height:16px;background:#fff"></div>
<div style="left:714px;top:519px;width:1px;height:16px;background:#fff"></div>
<div style="left:779px;top:519px;width:1px;height:16px;background:#fff"></div>
<div style="left:1111px;top:519px;width:1px;height:16px;background:#fff"></div>
<div style="left:1176px;top:519px;width:1px;height:16px;background:#fff"></div>
<div style="left:1244px;top:519px;width:1px;height:16px;background:#fff"></div>
<div style="left:1364px;top:519px;width:1px;height:16px;background:#fff"></div>
<div style="left:1431px;top:519px;width:1px;height:16px;background:#fff"></div>
<div style="left:1468px;top:519px;width:1px;height:16px;background:#fff"></div>
<div style="left:1533px;top:519px;width:1px;height:16px;background:#fff"></div>
<div style="left:1663px;top:519px;width:1px;height:16px;background:#fff"></div>
<div style="left:1701px;top:519px;width:1px;height:16px;background:#fff"></div>
<div style="left:0px;top:519px;width:25px;height:17px;background:#e4ecf7"></div>
<div style="left:0px;top:535px;width:25px;height:1px;#a9bdd6"></div>
<div class="c cr" style="left:-13px;top:519px;width:36px;height:16px;font-size:13px;color:#1a1aff;padding-top:1px">2292</div>
<div class="c cr" style="left:26px;top:519px;width:54px;height:16px;padding:0 2px;padding-top:1px;font-size:12px;letter-spacing:-0.6px;">2020</div>
<div class="c cc" style="left:81px;top:519px;width:28px;height:16px;padding:0 2px;padding-top:1px;font-size:13px;color:#e04a1c">1</div>
<div class="c cc" style="left:159px;top:519px;width:32px;height:16px;padding:0 2px;padding-top:1px;font-family:'Liberation Serif',serif;font-size:13px;color:#e04a1c">E</div>
<div class="c cc" style="left:192px;top:519px;width:32px;height:16px;padding:0 0px;padding-top:1px;background:radial-gradient(ellipse 55% 75% at 50% 50%,#d8fde9 0%,#9ef6c4 45%,#3fec88 100%);font-family:'Liberation Serif',serif;font-size:13px;letter-spacing:-1px;color:#0c1a80;">AC</div>
<div class="c cc" style="left:225px;top:519px;width:41px;height:16px;padding:0 0px;padding-top:1px;background:#8db4e2;font-size:11.5px;letter-spacing:-0.4px;">20,0<span style="font-size:8.5px;letter-spacing:0">%</span></div>
<div class="c cc" style="left:267px;top:519px;width:61px;height:16px;padding:0 0px;padding-top:1px;background:linear-gradient(#f4fff4 0%,#8fe08f 30%,#22b44a 80%,#10a33a 100%);font-size:13px;">99</div>
<div class="c cl" style="left:329px;top:519px;width:385px;height:16px;padding:0 2px;padding-top:1px;font-size:13px;justify-content:flex-start">LUDY ROCHER&nbsp; 87 0637618301</div>
<div class="c cr" style="left:715px;top:519px;width:64px;height:16px;padding:0 3px;padding-top:1px;background:#ffe699;font-size:13px;color:#d47c00">x</div>
<div class="c cl" style="left:780px;top:519px;width:331px;height:16px;padding:0 2px;padding-top:1px;font-size:13px;justify-content:flex-start">RSD Réparations</div>
<div class="c cc" style="left:1177px;top:519px;width:67px;height:16px;padding:0 0px;padding-top:1px;background:#ff33cc;font-size:13px;">30/06/20</div>
<div class="c cr" style="left:1245px;top:519px;width:119px;height:16px;padding:0 31px;padding-top:1px;font-size:13px;">-</div>
<div class="c cc" style="left:1432px;top:519px;width:36px;height:16px;padding:0 2px;padding-top:1px;font-size:11.5px;">0</div>
<div class="c cc" style="left:1469px;top:519px;width:64px;height:16px;padding:0 2px;padding-top:1px;font-size:12px;">-</div>
<div class="c cr" style="left:1534px;top:519px;width:129px;height:16px;padding:0 20px;padding-top:1px;font-size:12px;">-</div>
<div class="c cc" style="left:1702px;top:519px;width:54px;height:16px;padding:0 2px;padding-top:1px;font-size:12.5px;letter-spacing:-0.2px;color:#d4401c;padding-top:2px">784</div>
<div style="left:1757px;top:535px;width:4px;height:1px;background:#d0d7e5"></div>
<div style="left:26px;top:536px;width:1730px;height:16px;background:#dce6f1"></div>
<div style="left:26px;top:552px;width:1730px;height:1px;background:#fff"></div>
<div style="left:80px;top:536px;width:1px;height:16px;background:#fff"></div>
<div style="left:109px;top:536px;width:1px;height:16px;background:#fff"></div>
<div style="left:158px;top:536px;width:1px;height:16px;background:#fff"></div>
<div style="left:191px;top:536px;width:1px;height:16px;background:#fff"></div>
<div style="left:224px;top:536px;width:1px;height:16px;background:#fff"></div>
<div style="left:266px;top:536px;width:1px;height:16px;background:#fff"></div>
<div style="left:328px;top:536px;width:1px;height:16px;background:#fff"></div>
<div style="left:714px;top:536px;width:1px;height:16px;background:#fff"></div>
<div style="left:779px;top:536px;width:1px;height:16px;background:#fff"></div>
<div style="left:1111px;top:536px;width:1px;height:16px;background:#fff"></div>
<div style="left:1176px;top:536px;width:1px;height:16px;background:#fff"></div>
<div style="left:1244px;top:536px;width:1px;height:16px;background:#fff"></div>
<div style="left:1364px;top:536px;width:1px;height:16px;background:#fff"></div>
<div style="left:1431px;top:536px;width:1px;height:16px;background:#fff"></div>
<div style="left:1468px;top:536px;width:1px;height:16px;background:#fff"></div>
<div style="left:1533px;top:536px;width:1px;height:16px;background:#fff"></div>
<div style="left:1663px;top:536px;width:1px;height:16px;background:#fff"></div>
<div style="left:1701px;top:536px;width:1px;height:16px;background:#fff"></div>
<div style="left:0px;top:536px;width:25px;height:17px;background:#e4ecf7"></div>
<div style="left:0px;top:552px;width:25px;height:1px;#a9bdd6"></div>
<div class="c cr" style="left:-13px;top:536px;width:36px;height:16px;font-size:13px;color:#1a1aff;padding-top:1px">2293</div>
<div class="c cr" style="left:26px;top:536px;width:54px;height:16px;padding:0 2px;padding-top:1px;font-size:11.5px;letter-spacing:-0.9px;">2019</div>
<div class="c cc" style="left:81px;top:536px;width:28px;height:16px;padding:0 2px;padding-top:1px;font-size:13px;color:#e04a1c">1</div>
<div class="c cc" style="left:159px;top:536px;width:32px;height:16px;padding:0 2px;padding-top:1px;font-family:'Liberation Serif',serif;font-size:13px;color:#e04a1c">E</div>
<div class="c cc" style="left:192px;top:536px;width:32px;height:16px;padding:0 0px;padding-top:1px;background:radial-gradient(ellipse 55% 75% at 50% 50%,#d8fde9 0%,#9ef6c4 45%,#3fec88 100%);font-family:'Liberation Serif',serif;font-size:13px;letter-spacing:-1px;color:#0c1a80;">AC</div>
<div class="c cc" style="left:225px;top:536px;width:41px;height:16px;padding:0 0px;padding-top:1px;background:#8db4e2;font-size:11.5px;letter-spacing:-0.4px;">20,0<span style="font-size:8.5px;letter-spacing:0">%</span></div>
<div class="c cc" style="left:267px;top:536px;width:61px;height:16px;padding:0 0px;padding-top:1px;background:linear-gradient(#f4fff4 0%,#8fe08f 30%,#22b44a 80%,#10a33a 100%);font-size:13px;">99</div>
<div class="c cl" style="left:329px;top:536px;width:385px;height:16px;padding:0 2px;padding-top:1px;font-size:13px;justify-content:flex-start">NAUD Michel GAEC DE ROUX&nbsp; *T:&nbsp; 0 *P:&nbsp; 0685204947</div>
<div class="c cr" style="left:715px;top:536px;width:64px;height:16px;padding:0 3px;padding-top:1px;background:#ffe699;font-size:13px;color:#d47c00">x</div>
<div class="c cl" style="left:780px;top:536px;width:331px;height:16px;padding:0 2px;padding-top:1px;font-size:13px;justify-content:flex-start">RSD&nbsp; Réparations Naud</div>
<div class="c cc" style="left:1112px;top:536px;width:64px;height:16px;padding:0 2px;padding-top:1px;font-size:13px;color:#e04a1c">12/3</div>
<div class="c cc" style="left:1177px;top:536px;width:67px;height:16px;padding:0 0px;padding-top:1px;font-size:13px;">12/03/19</div>
<div class="c cr" style="left:1245px;top:536px;width:119px;height:16px;padding:0 31px;padding-top:1px;font-size:13px;">-</div>
<div class="c cc" style="left:1432px;top:536px;width:36px;height:16px;padding:0 2px;padding-top:1px;font-size:11.5px;">0</div>
<div class="c cc" style="left:1469px;top:536px;width:64px;height:16px;padding:0 2px;padding-top:1px;font-size:12px;">-</div>
<div class="c cr" style="left:1534px;top:536px;width:129px;height:16px;padding:0 20px;padding-top:1px;font-size:12px;">-</div>
<div class="c cc" style="left:1702px;top:536px;width:54px;height:16px;padding:0 2px;padding-top:1px;font-size:12.5px;letter-spacing:-0.2px;color:#d4401c;padding-top:2px">659</div>
<div style="left:1757px;top:552px;width:4px;height:1px;background:#d0d7e5"></div>
<div style="left:26px;top:553px;width:1730px;height:16px;background:#b8cce4"></div>
<div style="left:26px;top:569px;width:1730px;height:1px;background:#fff"></div>
<div style="left:80px;top:553px;width:1px;height:16px;background:#fff"></div>
<div style="left:109px;top:553px;width:1px;height:16px;background:#fff"></div>
<div style="left:158px;top:553px;width:1px;height:16px;background:#fff"></div>
<div style="left:191px;top:553px;width:1px;height:16px;background:#fff"></div>
<div style="left:224px;top:553px;width:1px;height:16px;background:#fff"></div>
<div style="left:266px;top:553px;width:1px;height:16px;background:#fff"></div>
<div style="left:328px;top:553px;width:1px;height:16px;background:#fff"></div>
<div style="left:714px;top:553px;width:1px;height:16px;background:#fff"></div>
<div style="left:779px;top:553px;width:1px;height:16px;background:#fff"></div>
<div style="left:1111px;top:553px;width:1px;height:16px;background:#fff"></div>
<div style="left:1176px;top:553px;width:1px;height:16px;background:#fff"></div>
<div style="left:1244px;top:553px;width:1px;height:16px;background:#fff"></div>
<div style="left:1364px;top:553px;width:1px;height:16px;background:#fff"></div>
<div style="left:1431px;top:553px;width:1px;height:16px;background:#fff"></div>
<div style="left:1468px;top:553px;width:1px;height:16px;background:#fff"></div>
<div style="left:1533px;top:553px;width:1px;height:16px;background:#fff"></div>
<div style="left:1663px;top:553px;width:1px;height:16px;background:#fff"></div>
<div style="left:1701px;top:553px;width:1px;height:16px;background:#fff"></div>
<div style="left:0px;top:553px;width:25px;height:17px;background:#e4ecf7"></div>
<div style="left:0px;top:569px;width:25px;height:1px;#a9bdd6"></div>
<div class="c cr" style="left:-13px;top:553px;width:36px;height:16px;font-size:13px;color:#1a1aff;padding-top:1px">2294</div>
<div class="c cr" style="left:26px;top:553px;width:54px;height:16px;padding:0 2px;padding-top:1px;font-size:12px;letter-spacing:-0.6px;">2020</div>
<div class="c cc" style="left:81px;top:553px;width:28px;height:16px;padding:0 2px;padding-top:1px;font-size:13px;color:#e04a1c">1</div>
<div class="c cc" style="left:159px;top:553px;width:32px;height:16px;padding:0 2px;padding-top:1px;font-family:'Liberation Serif',serif;font-size:13px;color:#e04a1c">E</div>
<div class="c cc" style="left:192px;top:553px;width:32px;height:16px;padding:0 0px;padding-top:1px;background:radial-gradient(ellipse 55% 75% at 50% 50%,#d8fde9 0%,#9ef6c4 45%,#3fec88 100%);font-family:'Liberation Serif',serif;font-size:13px;letter-spacing:-1px;color:#0c1a80;">AC</div>
<div class="c cc" style="left:225px;top:553px;width:41px;height:16px;padding:0 0px;padding-top:1px;background:#8db4e2;font-size:11.5px;letter-spacing:-0.4px;">20,0<span style="font-size:8.5px;letter-spacing:0">%</span></div>
<div class="c cc" style="left:267px;top:553px;width:61px;height:16px;padding:0 0px;padding-top:1px;background:linear-gradient(#f4fff4 0%,#8fe08f 30%,#22b44a 80%,#10a33a 100%);font-size:13px;">99</div>
<div class="c cl" style="left:329px;top:553px;width:385px;height:16px;padding:0 2px;padding-top:1px;font-size:13px;justify-content:flex-start">PATARIN Jerome&nbsp; *T:&nbsp; 0549690638 *P:&nbsp; 0681713659</div>
<div class="c cr" style="left:715px;top:553px;width:64px;height:16px;padding:0 3px;padding-top:1px;background:#ffe699;font-size:13px;color:#d47c00">x</div>
<div class="c cl" style="left:780px;top:553px;width:331px;height:16px;padding:0 2px;padding-top:1px;font-size:13px;justify-content:flex-start">RSD Réparations</div>
<div class="c cc" style="left:1112px;top:553px;width:64px;height:16px;padding:0 2px;padding-top:1px;font-size:13px;color:#e04a1c">15/1</div>
<div class="c cc" style="left:1177px;top:553px;width:67px;height:16px;padding:0 0px;padding-top:1px;font-size:13px;">15/01/20</div>
<div class="c cr" style="left:1245px;top:553px;width:119px;height:16px;padding:0 31px;padding-top:1px;font-size:13px;">-</div>
<div class="c cc" style="left:1432px;top:553px;width:36px;height:16px;padding:0 2px;padding-top:1px;font-size:11.5px;">0</div>
<div class="c cc" style="left:1469px;top:553px;width:64px;height:16px;padding:0 2px;padding-top:1px;font-size:12px;">-</div>
<div class="c cr" style="left:1534px;top:553px;width:129px;height:16px;padding:0 20px;padding-top:1px;font-size:12px;">-</div>
<div class="c cc" style="left:1702px;top:553px;width:54px;height:16px;padding:0 2px;padding-top:1px;font-size:12.5px;letter-spacing:-0.2px;color:#d4401c;padding-top:2px">771</div>
<div style="left:1757px;top:569px;width:4px;height:1px;background:#d0d7e5"></div>
<div style="left:26px;top:570px;width:1730px;height:16px;background:#dce6f1"></div>
<div style="left:26px;top:586px;width:1730px;height:1px;background:#fff"></div>
<div style="left:80px;top:570px;width:1px;height:16px;background:#fff"></div>
<div style="left:109px;top:570px;width:1px;height:16px;background:#fff"></div>
<div style="left:158px;top:570px;width:1px;height:16px;background:#fff"></div>
<div style="left:191px;top:570px;width:1px;height:16px;background:#fff"></div>
<div style="left:224px;top:570px;width:1px;height:16px;background:#fff"></div>
<div style="left:266px;top:570px;width:1px;height:16px;background:#fff"></div>
<div style="left:328px;top:570px;width:1px;height:16px;background:#fff"></div>
<div style="left:714px;top:570px;width:1px;height:16px;background:#fff"></div>
<div style="left:779px;top:570px;width:1px;height:16px;background:#fff"></div>
<div style="left:1111px;top:570px;width:1px;height:16px;background:#fff"></div>
<div style="left:1176px;top:570px;width:1px;height:16px;background:#fff"></div>
<div style="left:1244px;top:570px;width:1px;height:16px;background:#fff"></div>
<div style="left:1364px;top:570px;width:1px;height:16px;background:#fff"></div>
<div style="left:1431px;top:570px;width:1px;height:16px;background:#fff"></div>
<div style="left:1468px;top:570px;width:1px;height:16px;background:#fff"></div>
<div style="left:1533px;top:570px;width:1px;height:16px;background:#fff"></div>
<div style="left:1663px;top:570px;width:1px;height:16px;background:#fff"></div>
<div style="left:1701px;top:570px;width:1px;height:16px;background:#fff"></div>
<div style="left:0px;top:570px;width:25px;height:17px;background:#e4ecf7"></div>
<div style="left:0px;top:586px;width:25px;height:1px;#a9bdd6"></div>
<div class="c cr" style="left:-13px;top:570px;width:36px;height:16px;font-size:13px;color:#1a1aff;padding-top:1px">2295</div>
<div class="c cr" style="left:26px;top:570px;width:54px;height:16px;padding:0 2px;padding-top:1px;font-size:12px;letter-spacing:-0.6px;">2020</div>
<div class="c cc" style="left:81px;top:570px;width:28px;height:16px;padding:0 2px;padding-top:1px;font-size:13px;color:#e04a1c">1</div>
<div class="c cc" style="left:159px;top:570px;width:32px;height:16px;padding:0 2px;padding-top:1px;font-family:'Liberation Serif',serif;font-size:13px;color:#e04a1c">E</div>
<div class="c cc" style="left:192px;top:570px;width:32px;height:16px;padding:0 0px;padding-top:1px;background:radial-gradient(ellipse 55% 75% at 50% 50%,#d8fde9 0%,#9ef6c4 45%,#3fec88 100%);font-family:'Liberation Serif',serif;font-size:13px;letter-spacing:-1px;color:#0c1a80;">AC</div>
<div class="c cc" style="left:225px;top:570px;width:41px;height:16px;padding:0 0px;padding-top:1px;background:#8db4e2;font-size:11.5px;letter-spacing:-0.4px;">20,0<span style="font-size:8.5px;letter-spacing:0">%</span></div>
<div class="c cc" style="left:267px;top:570px;width:61px;height:16px;padding:0 0px;padding-top:1px;background:linear-gradient(#f4fff4 0%,#8fe08f 30%,#22b44a 80%,#10a33a 100%);font-size:13px;">99</div>
<div class="c cl" style="left:329px;top:570px;width:385px;height:16px;padding:0 2px;padding-top:1px;font-size:13px;justify-content:flex-start">PETERSCMIDTT</div>
<div class="c cr" style="left:715px;top:570px;width:64px;height:16px;padding:0 3px;padding-top:1px;background:#ffe699;font-size:13px;color:#d47c00">x</div>
<div class="c cl" style="left:780px;top:570px;width:331px;height:16px;padding:0 2px;padding-top:1px;font-size:13px;justify-content:flex-start">RSD Réparations</div>
<div class="c cc" style="left:1177px;top:570px;width:67px;height:16px;padding:0 0px;padding-top:1px;background:#ff33cc;font-size:13px;">30/06/20</div>
<div class="c cr" style="left:1245px;top:570px;width:119px;height:16px;padding:0 31px;padding-top:1px;font-size:13px;">-</div>
<div class="c cc" style="left:1432px;top:570px;width:36px;height:16px;padding:0 2px;padding-top:1px;font-size:11.5px;">0</div>
<div class="c cc" style="left:1469px;top:570px;width:64px;height:16px;padding:0 2px;padding-top:1px;font-size:12px;">-</div>
<div class="c cr" style="left:1534px;top:570px;width:129px;height:16px;padding:0 20px;padding-top:1px;font-size:12px;">-</div>
<div class="c cc" style="left:1702px;top:570px;width:54px;height:16px;padding:0 2px;padding-top:1px;font-size:12.5px;letter-spacing:-0.2px;color:#d4401c;padding-top:2px">811</div>
<div style="left:1757px;top:586px;width:4px;height:1px;background:#d0d7e5"></div>
<div style="left:26px;top:587px;width:1730px;height:16px;background:#b8cce4"></div>
<div style="left:26px;top:603px;width:1730px;height:1px;background:#fff"></div>
<div style="left:80px;top:587px;width:1px;height:16px;background:#fff"></div>
<div style="left:109px;top:587px;width:1px;height:16px;background:#fff"></div>
<div style="left:158px;top:587px;width:1px;height:16px;background:#fff"></div>
<div style="left:191px;top:587px;width:1px;height:16px;background:#fff"></div>
<div style="left:224px;top:587px;width:1px;height:16px;background:#fff"></div>
<div style="left:266px;top:587px;width:1px;height:16px;background:#fff"></div>
<div style="left:328px;top:587px;width:1px;height:16px;background:#fff"></div>
<div style="left:714px;top:587px;width:1px;height:16px;background:#fff"></div>
<div style="left:779px;top:587px;width:1px;height:16px;background:#fff"></div>
<div style="left:1111px;top:587px;width:1px;height:16px;background:#fff"></div>
<div style="left:1176px;top:587px;width:1px;height:16px;background:#fff"></div>
<div style="left:1244px;top:587px;width:1px;height:16px;background:#fff"></div>
<div style="left:1364px;top:587px;width:1px;height:16px;background:#fff"></div>
<div style="left:1431px;top:587px;width:1px;height:16px;background:#fff"></div>
<div style="left:1468px;top:587px;width:1px;height:16px;background:#fff"></div>
<div style="left:1533px;top:587px;width:1px;height:16px;background:#fff"></div>
<div style="left:1663px;top:587px;width:1px;height:16px;background:#fff"></div>
<div style="left:1701px;top:587px;width:1px;height:16px;background:#fff"></div>
<div style="left:0px;top:587px;width:25px;height:17px;background:#e4ecf7"></div>
<div style="left:0px;top:603px;width:25px;height:1px;#a9bdd6"></div>
<div class="c cr" style="left:-13px;top:587px;width:36px;height:16px;font-size:13px;color:#1a1aff;padding-top:1px">2298</div>
<div class="c cr" style="left:26px;top:587px;width:54px;height:16px;padding:0 2px;padding-top:1px;font-size:12px;letter-spacing:-0.6px;">2020</div>
<div class="c cc" style="left:81px;top:587px;width:28px;height:16px;padding:0 2px;padding-top:1px;font-size:13px;color:#e04a1c">1</div>
<div class="c cc" style="left:159px;top:587px;width:32px;height:16px;padding:0 2px;padding-top:1px;font-family:'Liberation Serif',serif;font-size:13px;color:#e04a1c">E</div>
<div class="c cc" style="left:192px;top:587px;width:32px;height:16px;padding:0 0px;padding-top:1px;background:radial-gradient(ellipse 55% 75% at 50% 50%,#d8fde9 0%,#9ef6c4 45%,#3fec88 100%);font-family:'Liberation Serif',serif;font-size:13px;letter-spacing:-1px;color:#0c1a80;">AC</div>
<div class="c cc" style="left:225px;top:587px;width:41px;height:16px;padding:0 0px;padding-top:1px;background:#8db4e2;font-size:11.5px;letter-spacing:-0.4px;">20,0<span style="font-size:8.5px;letter-spacing:0">%</span></div>
<div class="c cc" style="left:267px;top:587px;width:61px;height:16px;padding:0 0px;padding-top:1px;background:linear-gradient(#f4fff4 0%,#8fe08f 30%,#22b44a 80%,#10a33a 100%);font-size:13px;">99</div>
<div class="c cl" style="left:329px;top:587px;width:385px;height:16px;padding:0 2px;padding-top:1px;font-size:13px;justify-content:flex-start">ROBIN Alain&nbsp; *T:&nbsp; 0549045070 *P:&nbsp; 0682868897</div>
<div class="c cr" style="left:715px;top:587px;width:64px;height:16px;padding:0 3px;padding-top:1px;background:#ffe699;font-size:13px;color:#d47c00">x</div>
<div class="c cl" style="left:780px;top:587px;width:331px;height:16px;padding:0 2px;padding-top:1px;font-size:13px;justify-content:flex-start">79 frontenay 20 0 30 HA&nbsp; Dev 190908</div>
<div class="c cc" style="left:1112px;top:587px;width:64px;height:16px;padding:0 2px;padding-top:1px;font-size:13px;color:#e04a1c">17/2</div>
<div class="c cc" style="left:1177px;top:587px;width:67px;height:16px;padding:0 0px;padding-top:1px;font-size:13px;">17/02/20</div>
<div class="c cr" style="left:1245px;top:587px;width:119px;height:16px;padding:0 18px;padding-top:1px;font-size:13px;">44 499,00</div>
<div class="c cc" style="left:1432px;top:587px;width:36px;height:16px;padding:0 2px;padding-top:1px;font-size:11.5px;">0</div>
<div class="c cc" style="left:1469px;top:587px;width:64px;height:16px;padding:0 2px;padding-top:1px;font-size:12px;">-</div>
<div class="c cr" style="left:1534px;top:587px;width:129px;height:16px;padding:0 20px;padding-top:1px;font-size:12px;">-</div>
<div class="c cc" style="left:1702px;top:587px;width:54px;height:16px;padding:0 0px;padding-top:1px;background:#ffff00;font-size:12.5px;letter-spacing:-0.2px;color:#d4401c;padding-top:2px">516</div>
<div style="left:1757px;top:603px;width:4px;height:1px;background:#d0d7e5"></div>
<div style="left:26px;top:604px;width:1730px;height:16px;background:#dce6f1"></div>
<div style="left:26px;top:620px;width:1730px;height:1px;background:#fff"></div>
<div style="left:80px;top:604px;width:1px;height:16px;background:#fff"></div>
<div style="left:109px;top:604px;width:1px;height:16px;background:#fff"></div>
<div style="left:158px;top:604px;width:1px;height:16px;background:#fff"></div>
<div style="left:191px;top:604px;width:1px;height:16px;background:#fff"></div>
<div style="left:224px;top:604px;width:1px;height:16px;background:#fff"></div>
<div style="left:266px;top:604px;width:1px;height:16px;background:#fff"></div>
<div style="left:328px;top:604px;width:1px;height:16px;background:#fff"></div>
<div style="left:714px;top:604px;width:1px;height:16px;background:#fff"></div>
<div style="left:779px;top:604px;width:1px;height:16px;background:#fff"></div>
<div style="left:1111px;top:604px;width:1px;height:16px;background:#fff"></div>
<div style="left:1176px;top:604px;width:1px;height:16px;background:#fff"></div>
<div style="left:1244px;top:604px;width:1px;height:16px;background:#fff"></div>
<div style="left:1364px;top:604px;width:1px;height:16px;background:#fff"></div>
<div style="left:1431px;top:604px;width:1px;height:16px;background:#fff"></div>
<div style="left:1468px;top:604px;width:1px;height:16px;background:#fff"></div>
<div style="left:1533px;top:604px;width:1px;height:16px;background:#fff"></div>
<div style="left:1663px;top:604px;width:1px;height:16px;background:#fff"></div>
<div style="left:1701px;top:604px;width:1px;height:16px;background:#fff"></div>
<div style="left:0px;top:604px;width:25px;height:17px;background:#e4ecf7"></div>
<div style="left:0px;top:620px;width:25px;height:1px;#a9bdd6"></div>
<div class="c cr" style="left:-13px;top:604px;width:36px;height:16px;font-size:13px;color:#1a1aff;padding-top:1px">2299</div>
<div class="c cr" style="left:26px;top:604px;width:54px;height:16px;padding:0 2px;padding-top:1px;font-size:12px;letter-spacing:-0.6px;">2020</div>
<div class="c cc" style="left:81px;top:604px;width:28px;height:16px;padding:0 2px;padding-top:1px;font-size:13px;color:#e04a1c">3</div>
<div class="c cc" style="left:159px;top:604px;width:32px;height:16px;padding:0 2px;padding-top:1px;font-family:'Liberation Serif',serif;font-size:13px;color:#e04a1c">E</div>
<div class="c cc" style="left:192px;top:604px;width:32px;height:16px;padding:0 0px;padding-top:1px;background:radial-gradient(ellipse 55% 75% at 50% 50%,#d8fde9 0%,#9ef6c4 45%,#3fec88 100%);font-family:'Liberation Serif',serif;font-size:13px;letter-spacing:-1px;color:#0c1a80;">AC</div>
<div class="c cc" style="left:225px;top:604px;width:41px;height:16px;padding:0 0px;padding-top:1px;background:#8db4e2;font-size:11.5px;letter-spacing:-0.4px;">10,0<span style="font-size:8.5px;letter-spacing:0">%</span></div>
<div class="c cc" style="left:267px;top:604px;width:61px;height:16px;padding:0 0px;padding-top:1px;background:linear-gradient(#f4fff4 0%,#8fe08f 30%,#22b44a 80%,#10a33a 100%);font-size:13px;">99</div>
<div class="c cl" style="left:329px;top:604px;width:385px;height:16px;padding:0 2px;padding-top:1px;font-size:13px;justify-content:flex-start">ROCHE/DREVON</div>
<div class="c cr" style="left:715px;top:604px;width:64px;height:16px;padding:0 3px;padding-top:1px;background:#ffe699;font-size:13px;color:#d47c00">x</div>
<div class="c cl" style="left:780px;top:604px;width:331px;height:16px;padding:0 2px;padding-top:1px;font-size:13px;justify-content:flex-start">CONDUITES D EAU&nbsp; DEV190430 v2</div>
<div class="c cc" style="left:1112px;top:604px;width:64px;height:16px;padding:0 2px;padding-top:1px;font-size:13px;color:#e04a1c">6/9</div>
<div class="c cc" style="left:1177px;top:604px;width:67px;height:16px;padding:0 0px;padding-top:1px;font-size:13px;">06/09/19</div>
<div class="c cr" style="left:1245px;top:604px;width:119px;height:16px;padding:0 18px;padding-top:1px;font-size:13px;">18 799,00</div>
<div class="c cc" style="left:1432px;top:604px;width:36px;height:16px;padding:0 2px;padding-top:1px;font-size:11.5px;">0</div>
<div class="c cc" style="left:1469px;top:604px;width:64px;height:16px;padding:0 2px;padding-top:1px;font-size:12px;">-</div>
<div class="c cr" style="left:1534px;top:604px;width:129px;height:16px;padding:0 20px;padding-top:1px;font-size:12px;">-</div>
<div class="c cc" style="left:1702px;top:604px;width:54px;height:16px;padding:0 2px;padding-top:1px;font-size:12.5px;letter-spacing:-0.2px;color:#d4401c;padding-top:2px">703</div>
<div style="left:1757px;top:620px;width:4px;height:1px;background:#d0d7e5"></div>
<div style="left:26px;top:621px;width:1730px;height:16px;background:#b8cce4"></div>
<div style="left:26px;top:637px;width:1730px;height:1px;background:#fff"></div>
<div style="left:80px;top:621px;width:1px;height:16px;background:#fff"></div>
<div style="left:109px;top:621px;width:1px;height:16px;background:#fff"></div>
<div style="left:158px;top:621px;width:1px;height:16px;background:#fff"></div>
<div style="left:191px;top:621px;width:1px;height:16px;background:#fff"></div>
<div style="left:224px;top:621px;width:1px;height:16px;background:#fff"></div>
<div style="left:266px;top:621px;width:1px;height:16px;background:#fff"></div>
<div style="left:328px;top:621px;width:1px;height:16px;background:#fff"></div>
<div style="left:714px;top:621px;width:1px;height:16px;background:#fff"></div>
<div style="left:779px;top:621px;width:1px;height:16px;background:#fff"></div>
<div style="left:1111px;top:621px;width:1px;height:16px;background:#fff"></div>
<div style="left:1176px;top:621px;width:1px;height:16px;background:#fff"></div>
<div style="left:1244px;top:621px;width:1px;height:16px;background:#fff"></div>
<div style="left:1364px;top:621px;width:1px;height:16px;background:#fff"></div>
<div style="left:1431px;top:621px;width:1px;height:16px;background:#fff"></div>
<div style="left:1468px;top:621px;width:1px;height:16px;background:#fff"></div>
<div style="left:1533px;top:621px;width:1px;height:16px;background:#fff"></div>
<div style="left:1663px;top:621px;width:1px;height:16px;background:#fff"></div>
<div style="left:1701px;top:621px;width:1px;height:16px;background:#fff"></div>
<div style="left:0px;top:621px;width:25px;height:17px;background:#e4ecf7"></div>
<div style="left:0px;top:637px;width:25px;height:1px;#a9bdd6"></div>
<div class="c cr" style="left:-13px;top:621px;width:36px;height:16px;font-size:13px;color:#1a1aff;padding-top:1px">2300</div>
<div class="c cr" style="left:26px;top:621px;width:54px;height:16px;padding:0 2px;padding-top:1px;font-size:12px;letter-spacing:-0.6px;">2020</div>
<div class="c cc" style="left:81px;top:621px;width:28px;height:16px;padding:0 0px;padding-top:1px;background:linear-gradient(#e6ecde 0%,#b8d090 22%,#86b253 50%,#b8d090 78%,#e2e8dc 100%);font-size:13px;">S1</div>
<div class="c cc" style="left:110px;top:621px;width:48px;height:16px;padding:0 2px;padding-top:1px;font-family:'Liberation Serif',serif;font-size:13.5px;color:#e04a1c">0</div>
<div class="c cc" style="left:159px;top:621px;width:32px;height:16px;padding:0 2px;padding-top:1px;font-family:'Liberation Serif',serif;font-size:13px;color:#e04a1c">E</div>
<div class="c cl" style="left:192px;top:621px;width:32px;height:16px;padding:0 1px;padding-top:1px;background:radial-gradient(ellipse 40% 75% at 70% 50%,#e8fff2 0%,#9ef6c4 45%,#3fec88 100%);font-family:'Liberation Serif',serif;font-size:13px;letter-spacing:-1px;color:#0c1a80;justify-content:flex-start">AC</div>
<div class="c cc" style="left:225px;top:621px;width:41px;height:16px;padding:0 0px;padding-top:1px;background:#8db4e2;font-size:11.5px;letter-spacing:-0.4px;">20,0<span style="font-size:8.5px;letter-spacing:0">%</span></div>
<div class="c cc" style="left:267px;top:621px;width:61px;height:16px;padding:0 0px;padding-top:1px;background:linear-gradient(#f4fff4 0%,#8fe08f 30%,#22b44a 80%,#10a33a 100%);font-size:13px;">99</div>
<div class="c cl" style="left:329px;top:621px;width:385px;height:16px;padding:0 2px;padding-top:1px;font-size:13px;justify-content:flex-start">SARL CLOS DES DAMES</div>
<div class="c cr" style="left:715px;top:621px;width:64px;height:16px;padding:0 3px;padding-top:1px;background:#ffe699;font-size:13px;color:#d47c00">x</div>
<div class="c cl" style="left:780px;top:621px;width:331px;height:16px;padding:0 2px;padding-top:1px;font-size:13px;justify-content:flex-start">Lotissement lot 2&nbsp; #TR1</div>
<div class="c cc" style="left:1177px;top:621px;width:67px;height:16px;padding:0 0px;padding-top:1px;background:#ff33cc;font-size:13px;">30/06/20</div>
<div class="c cr" style="left:1245px;top:621px;width:119px;height:16px;padding:0 18px;padding-top:1px;font-size:13px;">10 000,00</div>
<div class="c cc" style="left:1432px;top:621px;width:36px;height:16px;padding:0 2px;padding-top:1px;font-size:11.5px;">0</div>
<div class="c cc" style="left:1469px;top:621px;width:64px;height:16px;padding:0 2px;padding-top:1px;font-size:12px;">-</div>
<div class="c cr" style="left:1534px;top:621px;width:129px;height:16px;padding:0 20px;padding-top:1px;font-size:12px;">-</div>
<div class="c cr" style="left:1664px;top:621px;width:37px;height:16px;padding:0 3px;padding-top:1px;background:#e46c0a;font-size:13px;">1</div>
<div style="left:1757px;top:637px;width:4px;height:1px;background:#d0d7e5"></div>
<div style="left:26px;top:638px;width:1730px;height:16px;background:#dce6f1"></div>
<div style="left:26px;top:654px;width:1730px;height:1px;background:#fff"></div>
<div style="left:80px;top:638px;width:1px;height:16px;background:#fff"></div>
<div style="left:109px;top:638px;width:1px;height:16px;background:#fff"></div>
<div style="left:158px;top:638px;width:1px;height:16px;background:#fff"></div>
<div style="left:191px;top:638px;width:1px;height:16px;background:#fff"></div>
<div style="left:224px;top:638px;width:1px;height:16px;background:#fff"></div>
<div style="left:266px;top:638px;width:1px;height:16px;background:#fff"></div>
<div style="left:328px;top:638px;width:1px;height:16px;background:#fff"></div>
<div style="left:714px;top:638px;width:1px;height:16px;background:#fff"></div>
<div style="left:779px;top:638px;width:1px;height:16px;background:#fff"></div>
<div style="left:1111px;top:638px;width:1px;height:16px;background:#fff"></div>
<div style="left:1176px;top:638px;width:1px;height:16px;background:#fff"></div>
<div style="left:1244px;top:638px;width:1px;height:16px;background:#fff"></div>
<div style="left:1364px;top:638px;width:1px;height:16px;background:#fff"></div>
<div style="left:1431px;top:638px;width:1px;height:16px;background:#fff"></div>
<div style="left:1468px;top:638px;width:1px;height:16px;background:#fff"></div>
<div style="left:1533px;top:638px;width:1px;height:16px;background:#fff"></div>
<div style="left:1663px;top:638px;width:1px;height:16px;background:#fff"></div>
<div style="left:1701px;top:638px;width:1px;height:16px;background:#fff"></div>
<div style="left:0px;top:638px;width:25px;height:17px;background:#e4ecf7"></div>
<div style="left:0px;top:654px;width:25px;height:1px;#a9bdd6"></div>
<div class="c cr" style="left:-13px;top:638px;width:36px;height:16px;font-size:13px;color:#1a1aff;padding-top:1px">2301</div>
<div class="c cr" style="left:26px;top:638px;width:54px;height:16px;padding:0 2px;padding-top:1px;font-size:11.5px;letter-spacing:-0.9px;">2019</div>
<div class="c cc" style="left:81px;top:638px;width:28px;height:16px;padding:0 2px;padding-top:1px;font-size:13px;color:#e04a1c">1</div>
<div class="c cc" style="left:159px;top:638px;width:32px;height:16px;padding:0 2px;padding-top:1px;font-family:'Liberation Serif',serif;font-size:13px;color:#e04a1c">E</div>
<div class="c cc" style="left:192px;top:638px;width:32px;height:16px;padding:0 0px;padding-top:1px;background:radial-gradient(ellipse 55% 75% at 50% 50%,#d8fde9 0%,#9ef6c4 45%,#3fec88 100%);font-family:'Liberation Serif',serif;font-size:13px;letter-spacing:-1px;color:#0c1a80;">AC</div>
<div class="c cc" style="left:225px;top:638px;width:41px;height:16px;padding:0 0px;padding-top:1px;background:#8db4e2;font-size:11.5px;letter-spacing:-0.4px;">20,0<span style="font-size:8.5px;letter-spacing:0">%</span></div>
<div class="c cc" style="left:267px;top:638px;width:61px;height:16px;padding:0 0px;padding-top:1px;background:linear-gradient(#f4fff4 0%,#8fe08f 30%,#22b44a 80%,#10a33a 100%);font-size:13px;">99</div>
<div class="c cl" style="left:329px;top:638px;width:385px;height:16px;padding:0 2px;padding-top:1px;font-size:13px;justify-content:flex-start">SIRE DRAINAGE</div>
<div class="c cr" style="left:715px;top:638px;width:64px;height:16px;padding:0 3px;padding-top:1px;background:#ffe699;font-size:13px;color:#d47c00">x</div>
<div class="c cl" style="left:780px;top:638px;width:331px;height:16px;padding:0 2px;padding-top:1px;font-size:13px;justify-content:flex-start">Pose Portail automatique</div>
<div class="c cc" style="left:1112px;top:638px;width:64px;height:16px;padding:0 2px;padding-top:1px;font-size:13px;color:#e04a1c">21/5</div>
<div class="c cc" style="left:1177px;top:638px;width:67px;height:16px;padding:0 0px;padding-top:1px;font-size:13px;">21/05/19</div>
<div class="c cr" style="left:1245px;top:638px;width:119px;height:16px;padding:0 18px;padding-top:1px;font-size:13px;">10 000,00</div>
<div class="c cc" style="left:1432px;top:638px;width:36px;height:16px;padding:0 2px;padding-top:1px;font-size:11.5px;">0</div>
<div class="c cc" style="left:1469px;top:638px;width:64px;height:16px;padding:0 2px;padding-top:1px;font-size:12px;">-</div>
<div class="c cr" style="left:1534px;top:638px;width:129px;height:16px;padding:0 20px;padding-top:1px;font-size:12px;">-</div>
<div style="left:1757px;top:654px;width:4px;height:1px;background:#d0d7e5"></div>
<div style="left:26px;top:655px;width:1730px;height:16px;background:#b8cce4"></div>
<div style="left:26px;top:671px;width:1730px;height:1px;background:#fff"></div>
<div style="left:80px;top:655px;width:1px;height:16px;background:#fff"></div>
<div style="left:109px;top:655px;width:1px;height:16px;background:#fff"></div>
<div style="left:158px;top:655px;width:1px;height:16px;background:#fff"></div>
<div style="left:191px;top:655px;width:1px;height:16px;background:#fff"></div>
<div style="left:224px;top:655px;width:1px;height:16px;background:#fff"></div>
<div style="left:266px;top:655px;width:1px;height:16px;background:#fff"></div>
<div style="left:328px;top:655px;width:1px;height:16px;background:#fff"></div>
<div style="left:714px;top:655px;width:1px;height:16px;background:#fff"></div>
<div style="left:779px;top:655px;width:1px;height:16px;background:#fff"></div>
<div style="left:1111px;top:655px;width:1px;height:16px;background:#fff"></div>
<div style="left:1176px;top:655px;width:1px;height:16px;background:#fff"></div>
<div style="left:1244px;top:655px;width:1px;height:16px;background:#fff"></div>
<div style="left:1364px;top:655px;width:1px;height:16px;background:#fff"></div>
<div style="left:1431px;top:655px;width:1px;height:16px;background:#fff"></div>
<div style="left:1468px;top:655px;width:1px;height:16px;background:#fff"></div>
<div style="left:1533px;top:655px;width:1px;height:16px;background:#fff"></div>
<div style="left:1663px;top:655px;width:1px;height:16px;background:#fff"></div>
<div style="left:1701px;top:655px;width:1px;height:16px;background:#fff"></div>
<div style="left:0px;top:655px;width:25px;height:17px;background:#e4ecf7"></div>
<div style="left:0px;top:671px;width:25px;height:1px;#a9bdd6"></div>
<div class="c cr" style="left:-13px;top:655px;width:36px;height:16px;font-size:13px;color:#1a1aff;padding-top:1px">2302</div>
<div class="c cr" style="left:26px;top:655px;width:54px;height:16px;padding:0 2px;padding-top:1px;font-size:12px;letter-spacing:-0.6px;">2020</div>
<div class="c cc" style="left:81px;top:655px;width:28px;height:16px;padding:0 2px;padding-top:1px;font-size:13px;color:#e04a1c">3</div>
<div class="c cc" style="left:110px;top:655px;width:48px;height:16px;padding:0 2px;padding-top:1px;font-family:'Liberation Serif',serif;font-size:13.5px;color:#e04a1c">0</div>
<div class="c cc" style="left:159px;top:655px;width:32px;height:16px;padding:0 2px;padding-top:1px;font-family:'Liberation Serif',serif;font-size:13px;color:#e04a1c">E</div>
<div class="c cc" style="left:192px;top:655px;width:32px;height:16px;padding:0 0px;padding-top:1px;background:radial-gradient(ellipse 55% 75% at 50% 50%,#d8fde9 0%,#9ef6c4 45%,#3fec88 100%);font-family:'Liberation Serif',serif;font-size:13px;letter-spacing:-1px;color:#0c1a80;">AC</div>
<div class="c cc" style="left:225px;top:655px;width:41px;height:16px;padding:0 0px;padding-top:1px;background:#8db4e2;font-size:11.5px;letter-spacing:-0.4px;">20,0<span style="font-size:8.5px;letter-spacing:0">%</span></div>
<div class="c cc" style="left:267px;top:655px;width:61px;height:16px;padding:0 0px;padding-top:1px;background:linear-gradient(#f4fff4 0%,#8fe08f 30%,#22b44a 80%,#10a33a 100%);font-size:13px;">99</div>
<div class="c cl" style="left:329px;top:655px;width:385px;height:16px;padding:0 2px;padding-top:1px;font-size:13px;justify-content:flex-start">TAUNAIS&nbsp; Earl Taunais&nbsp; *T:&nbsp; 0555682491 *P:&nbsp; 0</div>
<div class="c cr" style="left:715px;top:655px;width:64px;height:16px;padding:0 3px;padding-top:1px;background:#ffe699;font-size:13px;color:#d47c00">x</div>
<div class="c cl" style="left:780px;top:655px;width:331px;height:16px;padding:0 2px;padding-top:1px;font-size:13px;justify-content:flex-start">tx sept oct 2018 TERRASSEMENT dev 190316 # TR2</div>
<div class="c cc" style="left:1177px;top:655px;width:67px;height:16px;padding:0 0px;padding-top:1px;background:#ff33cc;font-size:13px;">30/06/20</div>
<div class="c cr" style="left:1245px;top:655px;width:119px;height:16px;padding:0 18px;padding-top:1px;font-size:13px;">18 000,00</div>
<div class="c cc" style="left:1432px;top:655px;width:36px;height:16px;padding:0 2px;padding-top:1px;font-size:11.5px;">0</div>
<div class="c cc" style="left:1469px;top:655px;width:64px;height:16px;padding:0 2px;padding-top:1px;font-size:12px;">-</div>
<div class="c cr" style="left:1534px;top:655px;width:129px;height:16px;padding:0 20px;padding-top:1px;font-size:12px;">-</div>
<div class="c cc" style="left:1702px;top:655px;width:54px;height:16px;padding:0 2px;padding-top:1px;font-size:12.5px;letter-spacing:-0.2px;color:#d4401c;padding-top:2px">481</div>
<div style="left:1757px;top:671px;width:4px;height:1px;background:#d0d7e5"></div>
<div style="left:26px;top:672px;width:1730px;height:16px;background:#dce6f1"></div>
<div style="left:26px;top:688px;width:1730px;height:1px;background:#fff"></div>
<div style="left:80px;top:672px;width:1px;height:16px;background:#fff"></div>
<div style="left:109px;top:672px;width:1px;height:16px;background:#fff"></div>
<div style="left:158px;top:672px;width:1px;height:16px;background:#fff"></div>
<div style="left:191px;top:672px;width:1px;height:16px;background:#fff"></div>
<div style="left:224px;top:672px;width:1px;height:16px;background:#fff"></div>
<div style="left:266px;top:672px;width:1px;height:16px;background:#fff"></div>
<div style="left:328px;top:672px;width:1px;height:16px;background:#fff"></div>
<div style="left:714px;top:672px;width:1px;height:16px;background:#fff"></div>
<div style="left:779px;top:672px;width:1px;height:16px;background:#fff"></div>
<div style="left:1111px;top:672px;width:1px;height:16px;background:#fff"></div>
<div style="left:1176px;top:672px;width:1px;height:16px;background:#fff"></div>
<div style="left:1244px;top:672px;width:1px;height:16px;background:#fff"></div>
<div style="left:1364px;top:672px;width:1px;height:16px;background:#fff"></div>
<div style="left:1431px;top:672px;width:1px;height:16px;background:#fff"></div>
<div style="left:1468px;top:672px;width:1px;height:16px;background:#fff"></div>
<div style="left:1533px;top:672px;width:1px;height:16px;background:#fff"></div>
<div style="left:1663px;top:672px;width:1px;height:16px;background:#fff"></div>
<div style="left:1701px;top:672px;width:1px;height:16px;background:#fff"></div>
<div style="left:0px;top:672px;width:25px;height:17px;background:linear-gradient(#fbe3b5,#f8cd80)"></div>
<div style="left:0px;top:688px;width:25px;height:1px;background:#f29436"></div>
<div class="c cr" style="left:-13px;top:672px;width:36px;height:16px;font-size:13px;color:#1a1aff;padding-top:1px">2303</div>
<div class="c cr" style="left:26px;top:672px;width:54px;height:16px;padding:0 2px;padding-top:1px;font-size:12px;letter-spacing:-0.6px;">2020</div>
<div class="c cc" style="left:81px;top:672px;width:28px;height:16px;padding:0 2px;padding-top:1px;font-size:13px;color:#e04a1c">3</div>
<div class="c cc" style="left:110px;top:672px;width:48px;height:16px;padding:0 2px;padding-top:1px;font-family:'Liberation Serif',serif;font-size:13.5px;color:#e04a1c">0</div>
<div class="c cc" style="left:159px;top:672px;width:32px;height:16px;padding:0 2px;padding-top:1px;font-family:'Liberation Serif',serif;font-size:13px;color:#e04a1c">D</div>
<div class="c cc" style="left:192px;top:672px;width:32px;height:16px;padding:0 0px;padding-top:1px;background:radial-gradient(ellipse 55% 75% at 50% 50%,#d8fde9 0%,#9ef6c4 45%,#3fec88 100%);"></div>
<div class="c cc" style="left:225px;top:672px;width:41px;height:16px;padding:0 0px;padding-top:1px;background:#8db4e2;font-size:11.5px;letter-spacing:-0.4px;">20,0<span style="font-size:8.5px;letter-spacing:0">%</span></div>
<div class="c cc" style="left:267px;top:672px;width:61px;height:16px;padding:0 0px;padding-top:1px;background:linear-gradient(#fdffe0 0%,#eeff80 40%,#d6ff10 80%,#ccf500 100%);font-size:13px;">88</div>
<div class="c cl" style="left:329px;top:672px;width:385px;height:16px;padding:0 2px;padding-top:1px;font-size:13px;justify-content:flex-start">AFAF AF PLIBOU</div>
<div class="c cr" style="left:715px;top:672px;width:64px;height:16px;padding:0 3px;padding-top:1px;background:#ffe699;font-size:13px;color:#d47c00">x</div>
<div class="c cl" style="left:780px;top:672px;width:331px;height:16px;padding:0 2px;padding-top:1px;font-size:13px;justify-content:flex-start">79 TX CONNEXES solde</div>
<div class="c cc" style="left:1177px;top:672px;width:67px;height:16px;padding:0 0px;padding-top:1px;background:#ff33cc;font-size:13px;">30/06/20</div>
<div class="c cr" style="left:1245px;top:672px;width:119px;height:16px;padding:0 18px;padding-top:1px;font-size:13px;">78 840,00</div>
<div class="c cc" style="left:1432px;top:672px;width:36px;height:16px;padding:0 2px;padding-top:1px;font-size:11.5px;">0</div>
<div class="c cc" style="left:1469px;top:672px;width:64px;height:16px;padding:0 2px;padding-top:1px;font-size:12px;">-</div>
<div class="c cr" style="left:1534px;top:672px;width:129px;height:16px;padding:0 20px;padding-top:1px;font-size:12px;">-</div>
<div class="c cc" style="left:1664px;top:672px;width:37px;height:16px;padding:0 0px;padding-top:1px;background:#e46c0a;"></div>
<div style="left:1757px;top:688px;width:4px;height:1px;background:#d0d7e5"></div>
<div style="left:26px;top:689px;width:1730px;height:16px;background:#b8cce4"></div>
<div style="left:26px;top:705px;width:1730px;height:1px;background:#fff"></div>
<div style="left:80px;top:689px;width:1px;height:16px;background:#fff"></div>
<div style="left:109px;top:689px;width:1px;height:16px;background:#fff"></div>
<div style="left:158px;top:689px;width:1px;height:16px;background:#fff"></div>
<div style="left:191px;top:689px;width:1px;height:16px;background:#fff"></div>
<div style="left:224px;top:689px;width:1px;height:16px;background:#fff"></div>
<div style="left:266px;top:689px;width:1px;height:16px;background:#fff"></div>
<div style="left:328px;top:689px;width:1px;height:16px;background:#fff"></div>
<div style="left:714px;top:689px;width:1px;height:16px;background:#fff"></div>
<div style="left:779px;top:689px;width:1px;height:16px;background:#fff"></div>
<div style="left:1111px;top:689px;width:1px;height:16px;background:#fff"></div>
<div style="left:1176px;top:689px;width:1px;height:16px;background:#fff"></div>
<div style="left:1244px;top:689px;width:1px;height:16px;background:#fff"></div>
<div style="left:1364px;top:689px;width:1px;height:16px;background:#fff"></div>
<div style="left:1431px;top:689px;width:1px;height:16px;background:#fff"></div>
<div style="left:1468px;top:689px;width:1px;height:16px;background:#fff"></div>
<div style="left:1533px;top:689px;width:1px;height:16px;background:#fff"></div>
<div style="left:1663px;top:689px;width:1px;height:16px;background:#fff"></div>
<div style="left:1701px;top:689px;width:1px;height:16px;background:#fff"></div>
<div style="left:0px;top:689px;width:25px;height:17px;background:#e4ecf7"></div>
<div style="left:0px;top:705px;width:25px;height:1px;#a9bdd6"></div>
<div class="c cr" style="left:-13px;top:689px;width:36px;height:16px;font-size:13px;color:#1a1aff;padding-top:1px">2304</div>
<div class="c cr" style="left:26px;top:689px;width:54px;height:16px;padding:0 2px;padding-top:1px;font-size:12px;letter-spacing:-0.6px;">2020</div>
<div class="c cc" style="left:81px;top:689px;width:28px;height:16px;padding:0 2px;padding-top:1px;font-size:13px;color:#e04a1c">1</div>
<div class="c cc" style="left:159px;top:689px;width:32px;height:16px;padding:0 2px;padding-top:1px;font-family:'Liberation Serif',serif;font-size:13px;color:#e04a1c">D</div>
<div class="c cc" style="left:192px;top:689px;width:32px;height:16px;padding:0 0px;padding-top:1px;background:radial-gradient(ellipse 55% 75% at 50% 50%,#d8fde9 0%,#9ef6c4 45%,#3fec88 100%);font-family:'Liberation Serif',serif;font-size:13px;letter-spacing:-1px;color:#0c1a80;">AC</div>
<div class="c cc" style="left:225px;top:689px;width:41px;height:16px;padding:0 0px;padding-top:1px;background:#8db4e2;font-size:11.5px;letter-spacing:-0.4px;">20,0<span style="font-size:8.5px;letter-spacing:0">%</span></div>
<div class="c cc" style="left:267px;top:689px;width:61px;height:16px;padding:0 0px;padding-top:1px;background:linear-gradient(#fdffe0 0%,#eeff80 40%,#d6ff10 80%,#ccf500 100%);font-size:13px;">88</div>
<div class="c cl" style="left:329px;top:689px;width:385px;height:16px;padding:0 2px;padding-top:1px;font-size:13px;justify-content:flex-start">AGRI FAYDEAU</div>
<div class="c cr" style="left:715px;top:689px;width:64px;height:16px;padding:0 3px;padding-top:1px;background:#ffe699;font-size:13px;color:#d47c00">x</div>
<div class="c cl" style="left:780px;top:689px;width:331px;height:16px;padding:0 2px;padding-top:1px;font-size:13px;justify-content:flex-start">RSD Réparations</div>
<div class="c cc" style="left:1177px;top:689px;width:67px;height:16px;padding:0 0px;padding-top:1px;background:#ff33cc;font-size:13px;">30/06/20</div>
<div class="c cr" style="left:1245px;top:689px;width:119px;height:16px;padding:0 31px;padding-top:1px;font-size:13px;">-</div>
<div class="c cc" style="left:1432px;top:689px;width:36px;height:16px;padding:0 2px;padding-top:1px;font-size:11.5px;">0</div>
<div class="c cc" style="left:1469px;top:689px;width:64px;height:16px;padding:0 2px;padding-top:1px;font-size:12px;">-</div>
<div class="c cr" style="left:1534px;top:689px;width:129px;height:16px;padding:0 20px;padding-top:1px;font-size:12px;">-</div>
<div class="c cc" style="left:1702px;top:689px;width:54px;height:16px;padding:0 2px;padding-top:1px;font-size:12.5px;letter-spacing:-0.2px;color:#d4401c;padding-top:2px">810</div>
<div style="left:1757px;top:705px;width:4px;height:1px;background:#d0d7e5"></div>
<div style="left:26px;top:706px;width:1730px;height:16px;background:#dce6f1"></div>
<div style="left:26px;top:722px;width:1730px;height:1px;background:#fff"></div>
<div style="left:80px;top:706px;width:1px;height:16px;background:#fff"></div>
<div style="left:109px;top:706px;width:1px;height:16px;background:#fff"></div>
<div style="left:158px;top:706px;width:1px;height:16px;background:#fff"></div>
<div style="left:191px;top:706px;width:1px;height:16px;background:#fff"></div>
<div style="left:224px;top:706px;width:1px;height:16px;background:#fff"></div>
<div style="left:266px;top:706px;width:1px;height:16px;background:#fff"></div>
<div style="left:328px;top:706px;width:1px;height:16px;background:#fff"></div>
<div style="left:714px;top:706px;width:1px;height:16px;background:#fff"></div>
<div style="left:779px;top:706px;width:1px;height:16px;background:#fff"></div>
<div style="left:1111px;top:706px;width:1px;height:16px;background:#fff"></div>
<div style="left:1176px;top:706px;width:1px;height:16px;background:#fff"></div>
<div style="left:1244px;top:706px;width:1px;height:16px;background:#fff"></div>
<div style="left:1364px;top:706px;width:1px;height:16px;background:#fff"></div>
<div style="left:1431px;top:706px;width:1px;height:16px;background:#fff"></div>
<div style="left:1468px;top:706px;width:1px;height:16px;background:#fff"></div>
<div style="left:1533px;top:706px;width:1px;height:16px;background:#fff"></div>
<div style="left:1663px;top:706px;width:1px;height:16px;background:#fff"></div>
<div style="left:1701px;top:706px;width:1px;height:16px;background:#fff"></div>
<div style="left:0px;top:706px;width:25px;height:17px;background:#e4ecf7"></div>
<div style="left:0px;top:722px;width:25px;height:1px;#a9bdd6"></div>
<div class="c cr" style="left:-13px;top:706px;width:36px;height:16px;font-size:13px;color:#1a1aff;padding-top:1px">2305</div>
<div class="c cr" style="left:26px;top:706px;width:54px;height:16px;padding:0 2px;padding-top:1px;font-size:12px;letter-spacing:-0.6px;">2020</div>
<div class="c cc" style="left:81px;top:706px;width:28px;height:16px;padding:0 2px;padding-top:1px;font-size:13px;color:#e04a1c">1</div>
<div class="c cc" style="left:110px;top:706px;width:48px;height:16px;padding:0 2px;padding-top:1px;font-family:'Liberation Serif',serif;font-size:13.5px;color:#e04a1c">7</div>
<div class="c cc" style="left:159px;top:706px;width:32px;height:16px;padding:0 2px;padding-top:1px;font-family:'Liberation Serif',serif;font-size:13px;color:#e04a1c">D</div>
<div class="c cc" style="left:192px;top:706px;width:32px;height:16px;padding:0 0px;padding-top:1px;background:radial-gradient(ellipse 55% 75% at 50% 50%,#d8fde9 0%,#9ef6c4 45%,#3fec88 100%);font-family:'Liberation Serif',serif;font-size:13px;letter-spacing:-1px;color:#0c1a80;">AC</div>
<div class="c cc" style="left:225px;top:706px;width:41px;height:16px;padding:0 0px;padding-top:1px;background:#8db4e2;font-size:11.5px;letter-spacing:-0.4px;">20,0<span style="font-size:8.5px;letter-spacing:0">%</span></div>
<div class="c cc" style="left:267px;top:706px;width:61px;height:16px;padding:0 0px;padding-top:1px;background:linear-gradient(#fdffe0 0%,#eeff80 40%,#d6ff10 80%,#ccf500 100%);font-size:13px;">88</div>
<div class="c cl" style="left:329px;top:706px;width:385px;height:16px;padding:0 2px;padding-top:1px;font-size:13px;justify-content:flex-start">BABIN Michel&nbsp; *T:&nbsp; 0549609307 *P:&nbsp; 0627740999</div>
<div class="c cr" style="left:715px;top:706px;width:64px;height:16px;padding:0 3px;padding-top:1px;background:#ffe699;font-size:13px;color:#d47c00">x</div>
<div class="c cl" style="left:780px;top:706px;width:331px;height:16px;padding:0 2px;padding-top:1px;font-size:13px;justify-content:flex-start">86 coulombiers TX SEPT 19&nbsp; &nbsp; dev 171210/2</div>
<div class="c cc" style="left:1177px;top:706px;width:67px;height:16px;padding:0 0px;padding-top:1px;background:#ff33cc;font-size:13px;">30/06/20</div>
<div class="c cr" style="left:1245px;top:706px;width:119px;height:16px;padding:0 18px;padding-top:1px;font-size:13px;">15 099,00</div>
<div class="c cc" style="left:1432px;top:706px;width:36px;height:16px;padding:0 2px;padding-top:1px;font-size:11.5px;">0</div>
<div class="c cc" style="left:1469px;top:706px;width:64px;height:16px;padding:0 2px;padding-top:1px;font-size:12px;">-</div>
<div class="c cr" style="left:1534px;top:706px;width:129px;height:16px;padding:0 20px;padding-top:1px;font-size:12px;">-</div>
<div class="c cc" style="left:1702px;top:706px;width:54px;height:16px;padding:0 2px;padding-top:1px;font-size:12.5px;letter-spacing:-0.2px;color:#d4401c;padding-top:2px">420</div>
<div style="left:1757px;top:722px;width:4px;height:1px;background:#d0d7e5"></div>
<div style="left:26px;top:723px;width:1730px;height:16px;background:#b8cce4"></div>
<div style="left:26px;top:739px;width:1730px;height:1px;background:#fff"></div>
<div style="left:80px;top:723px;width:1px;height:16px;background:#fff"></div>
<div style="left:109px;top:723px;width:1px;height:16px;background:#fff"></div>
<div style="left:158px;top:723px;width:1px;height:16px;background:#fff"></div>
<div style="left:191px;top:723px;width:1px;height:16px;background:#fff"></div>
<div style="left:224px;top:723px;width:1px;height:16px;background:#fff"></div>
<div style="left:266px;top:723px;width:1px;height:16px;background:#fff"></div>
<div style="left:328px;top:723px;width:1px;height:16px;background:#fff"></div>
<div style="left:714px;top:723px;width:1px;height:16px;background:#fff"></div>
<div style="left:779px;top:723px;width:1px;height:16px;background:#fff"></div>
<div style="left:1111px;top:723px;width:1px;height:16px;background:#fff"></div>
<div style="left:1176px;top:723px;width:1px;height:16px;background:#fff"></div>
<div style="left:1244px;top:723px;width:1px;height:16px;background:#fff"></div>
<div style="left:1364px;top:723px;width:1px;height:16px;background:#fff"></div>
<div style="left:1431px;top:723px;width:1px;height:16px;background:#fff"></div>
<div style="left:1468px;top:723px;width:1px;height:16px;background:#fff"></div>
<div style="left:1533px;top:723px;width:1px;height:16px;background:#fff"></div>
<div style="left:1663px;top:723px;width:1px;height:16px;background:#fff"></div>
<div style="left:1701px;top:723px;width:1px;height:16px;background:#fff"></div>
<div style="left:0px;top:723px;width:25px;height:17px;background:#e4ecf7"></div>
<div style="left:0px;top:739px;width:25px;height:1px;#a9bdd6"></div>
<div class="c cr" style="left:-13px;top:723px;width:36px;height:16px;font-size:13px;color:#1a1aff;padding-top:1px">2306</div>
<div class="c cr" style="left:26px;top:723px;width:54px;height:16px;padding:0 2px;padding-top:1px;font-size:12px;letter-spacing:-0.6px;">2020</div>
<div class="c cc" style="left:81px;top:723px;width:28px;height:16px;padding:0 2px;padding-top:1px;font-size:13px;color:#e04a1c">1</div>
<div class="c cc" style="left:110px;top:723px;width:48px;height:16px;padding:0 2px;padding-top:1px;font-family:'Liberation Serif',serif;font-size:13.5px;color:#e04a1c">0</div>
<div class="c cc" style="left:159px;top:723px;width:32px;height:16px;padding:0 2px;padding-top:1px;font-family:'Liberation Serif',serif;font-size:13px;color:#e04a1c">D</div>
<div class="c cc" style="left:192px;top:723px;width:32px;height:16px;padding:0 0px;padding-top:1px;background:radial-gradient(ellipse 55% 75% at 50% 50%,#d8fde9 0%,#9ef6c4 45%,#3fec88 100%);font-family:'Liberation Serif',serif;font-size:13px;letter-spacing:-1px;color:#0c1a80;">AC</div>
<div class="c cc" style="left:225px;top:723px;width:41px;height:16px;padding:0 0px;padding-top:1px;background:#8db4e2;font-size:11.5px;letter-spacing:-0.4px;">19,6<span style="font-size:8.5px;letter-spacing:0">%</span></div>
<div class="c cc" style="left:267px;top:723px;width:61px;height:16px;padding:0 0px;padding-top:1px;background:linear-gradient(#fdffe0 0%,#eeff80 40%,#d6ff10 80%,#ccf500 100%);font-size:13px;">88</div>
<div class="c cl" style="left:329px;top:723px;width:385px;height:16px;padding:0 2px;padding-top:1px;font-size:13px;justify-content:flex-start">BERTHELOT&nbsp; Gaec De La Chérie&nbsp; *T:&nbsp; &nbsp; DOUBLE EMPLOI</div>
<div class="c cr" style="left:715px;top:723px;width:64px;height:16px;padding:0 3px;padding-top:1px;background:#ffe699;font-size:13px;color:#d47c00">x</div>
<div class="c cl" style="left:780px;top:723px;width:331px;height:16px;padding:0 2px;padding-top:1px;font-size:13px;justify-content:flex-start">Champs en prairie+mais+blé</div>
<div class="c cc" style="left:1177px;top:723px;width:67px;height:16px;padding:0 0px;padding-top:1px;background:#ff33cc;font-size:13px;">30/06/20</div>
<div class="c cr" style="left:1245px;top:723px;width:119px;height:16px;padding:0 31px;padding-top:1px;font-size:13px;">-</div>
<div class="c cc" style="left:1432px;top:723px;width:36px;height:16px;padding:0 2px;padding-top:1px;font-size:11.5px;">0</div>
<div class="c cc" style="left:1469px;top:723px;width:64px;height:16px;padding:0 2px;padding-top:1px;font-size:12px;">-</div>
<div class="c cr" style="left:1534px;top:723px;width:129px;height:16px;padding:0 20px;padding-top:1px;font-size:12px;">-</div>
<div class="c cc" style="left:1702px;top:723px;width:54px;height:16px;padding:0 2px;padding-top:1px;font-size:12.5px;letter-spacing:-0.2px;color:#d4401c;padding-top:2px">50</div>
<div style="left:1757px;top:739px;width:4px;height:1px;background:#d0d7e5"></div>
<div style="left:26px;top:740px;width:1730px;height:16px;background:#dce6f1"></div>
<div style="left:26px;top:756px;width:1730px;height:1px;background:#fff"></div>
<div style="left:80px;top:740px;width:1px;height:16px;background:#fff"></div>
<div style="left:109px;top:740px;width:1px;height:16px;background:#fff"></div>
<div style="left:158px;top:740px;width:1px;height:16px;background:#fff"></div>
<div style="left:191px;top:740px;width:1px;height:16px;background:#fff"></div>
<div style="left:224px;top:740px;width:1px;height:16px;background:#fff"></div>
<div style="left:266px;top:740px;width:1px;height:16px;background:#fff"></div>
<div style="left:328px;top:740px;width:1px;height:16px;background:#fff"></div>
<div style="left:714px;top:740px;width:1px;height:16px;background:#fff"></div>
<div style="left:779px;top:740px;width:1px;height:16px;background:#fff"></div>
<div style="left:1111px;top:740px;width:1px;height:16px;background:#fff"></div>
<div style="left:1176px;top:740px;width:1px;height:16px;background:#fff"></div>
<div style="left:1244px;top:740px;width:1px;height:16px;background:#fff"></div>
<div style="left:1364px;top:740px;width:1px;height:16px;background:#fff"></div>
<div style="left:1431px;top:740px;width:1px;height:16px;background:#fff"></div>
<div style="left:1468px;top:740px;width:1px;height:16px;background:#fff"></div>
<div style="left:1533px;top:740px;width:1px;height:16px;background:#fff"></div>
<div style="left:1663px;top:740px;width:1px;height:16px;background:#fff"></div>
<div style="left:1701px;top:740px;width:1px;height:16px;background:#fff"></div>
<div style="left:0px;top:740px;width:25px;height:17px;background:#e4ecf7"></div>
<div style="left:0px;top:756px;width:25px;height:1px;#a9bdd6"></div>
<div class="c cr" style="left:-13px;top:740px;width:36px;height:16px;font-size:13px;color:#1a1aff;padding-top:1px">2307</div>
<div class="c cr" style="left:26px;top:740px;width:54px;height:16px;padding:0 2px;padding-top:1px;font-size:12px;letter-spacing:-0.6px;">2020</div>
<div class="c cc" style="left:81px;top:740px;width:28px;height:16px;padding:0 2px;padding-top:1px;font-size:13px;color:#e04a1c">1</div>
<div class="c cc" style="left:110px;top:740px;width:48px;height:16px;padding:0 2px;padding-top:1px;font-family:'Liberation Serif',serif;font-size:13.5px;color:#e04a1c">9</div>
<div class="c cc" style="left:159px;top:740px;width:32px;height:16px;padding:0 2px;padding-top:1px;font-family:'Liberation Serif',serif;font-size:13px;color:#e04a1c">D</div>
<div class="c cc" style="left:192px;top:740px;width:32px;height:16px;padding:0 0px;padding-top:1px;background:radial-gradient(ellipse 55% 75% at 50% 50%,#d8fde9 0%,#9ef6c4 45%,#3fec88 100%);font-family:'Liberation Serif',serif;font-size:13px;letter-spacing:-1px;color:#0c1a80;">AC</div>
<div class="c cc" style="left:225px;top:740px;width:41px;height:16px;padding:0 0px;padding-top:1px;background:#8db4e2;font-size:11.5px;letter-spacing:-0.4px;">20,0<span style="font-size:8.5px;letter-spacing:0">%</span></div>
<div class="c cc" style="left:267px;top:740px;width:61px;height:16px;padding:0 0px;padding-top:1px;background:linear-gradient(#fdffe0 0%,#eeff80 40%,#d6ff10 80%,#ccf500 100%);font-size:13px;">88</div>
<div class="c cl" style="left:329px;top:740px;width:385px;height:16px;padding:0 2px;padding-top:1px;font-size:13px;justify-content:flex-start">BERTHONNEAU Johan&nbsp; *T:&nbsp; 0549915043 *P:&nbsp; 0683989247</div>
<div class="c cr" style="left:715px;top:740px;width:64px;height:16px;padding:0 3px;padding-top:1px;background:#ffe699;font-size:13px;color:#d47c00">x</div>
<div class="c cl" style="left:780px;top:740px;width:331px;height:16px;padding:0 2px;padding-top:1px;font-size:13px;justify-content:flex-start">DOS 9 DEVIS 160213</div>
<div class="c cc" style="left:1177px;top:740px;width:67px;height:16px;padding:0 0px;padding-top:1px;background:#ff33cc;font-size:13px;">30/06/20</div>
<div class="c cr" style="left:1245px;top:740px;width:119px;height:16px;padding:0 18px;padding-top:1px;font-size:13px;">24 599,00</div>
<div class="c cc" style="left:1432px;top:740px;width:36px;height:16px;padding:0 2px;padding-top:1px;font-size:11.5px;">0</div>
<div class="c cc" style="left:1469px;top:740px;width:64px;height:16px;padding:0 2px;padding-top:1px;font-size:12px;">-</div>
<div class="c cr" style="left:1534px;top:740px;width:129px;height:16px;padding:0 20px;padding-top:1px;font-size:12px;">-</div>
<div class="c cc" style="left:1702px;top:740px;width:54px;height:16px;padding:0 2px;padding-top:1px;font-size:12.5px;letter-spacing:-0.2px;color:#d4401c;padding-top:2px">9</div>
<div style="left:1757px;top:756px;width:4px;height:1px;background:#d0d7e5"></div>
<div style="left:157px;top:670px;width:35px;height:20px;border:3px solid #000"></div>
<div style="left:188px;top:686px;width:6px;height:5px;background:#e4ecf7"></div>
<div style="left:189px;top:687px;width:4px;height:4px;background:#000"></div>
<div style="left:193px;top:672px;width:16px;height:17px;border:1px solid #9fb3d3;border-radius:2px;background:linear-gradient(#f6f6f6,#dcdcdc)"><div style="left:3px;top:6px;width:0;height:0;border-left:4px solid transparent;border-right:4px solid transparent;border-top:4px solid #2a3f70"></div></div></body></html>
